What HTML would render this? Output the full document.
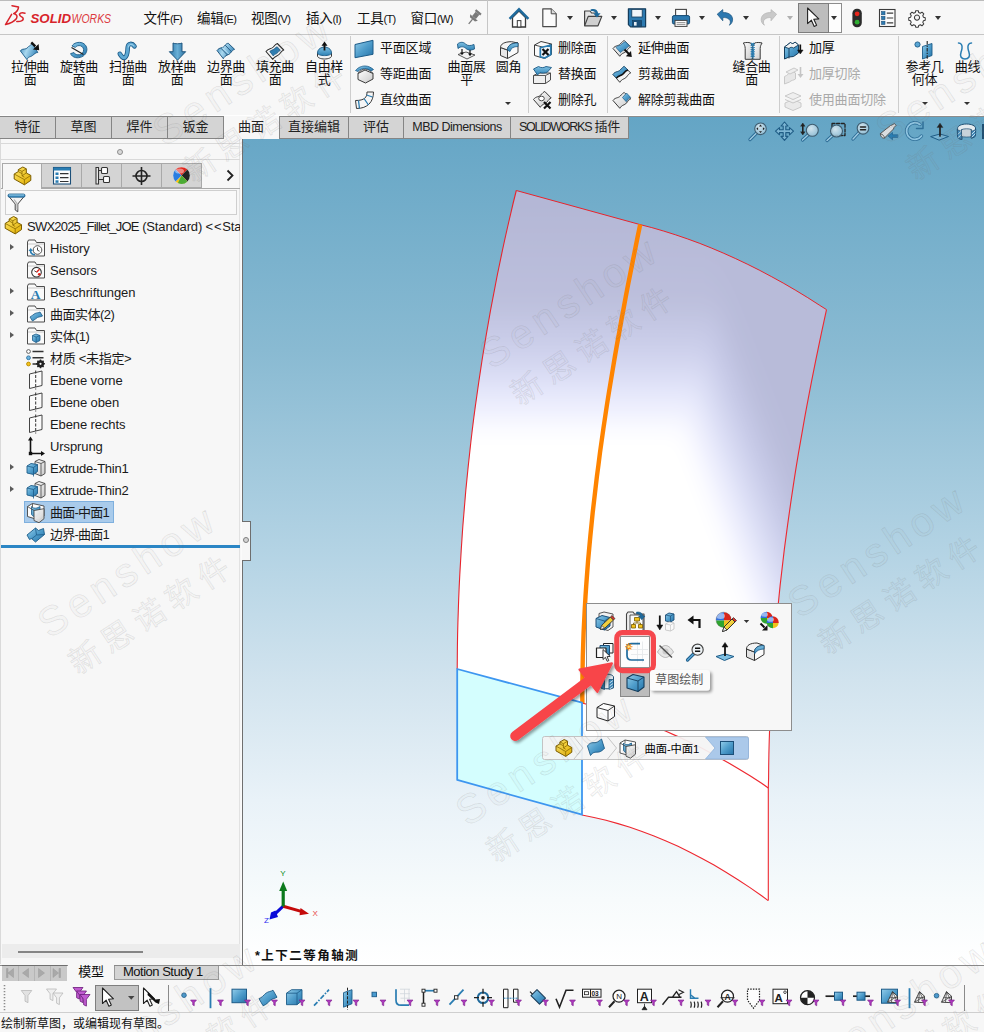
<!DOCTYPE html>
<html lang="zh">
<head>
<meta charset="utf-8">
<title>SOLIDWORKS</title>
<style>
*{box-sizing:border-box;margin:0;padding:0}
html,body{width:984px;height:1032px;overflow:hidden;background:#f7f7f7;}
body{position:relative;font-family:"Liberation Sans","Noto Sans CJK SC",sans-serif;font-size:13px;color:#1a1a1a;}
.abs{position:absolute}
svg{position:absolute;overflow:visible}
/* title bar */
#title{left:0;top:0;width:984px;height:35px;background:#f7f7f7;border-top:1px solid #bcbcbc;border-bottom:1px solid #c6c6c6}
.menu{top:7px;font-size:13.5px;color:#111;white-space:nowrap;letter-spacing:-0.2px}
.menu small{font-size:11px;letter-spacing:-0.7px}
.dd{width:0;height:0;border-left:3.5px solid transparent;border-right:3.5px solid transparent;border-top:4px solid #333}
/* ribbon */
#ribbon{left:0;top:35px;width:984px;height:81px;background:#f7f7f7}
.big{top:61px;width:50px;text-align:center;font-size:13px;line-height:12.5px;color:#111;letter-spacing:-0.3px}
.sm{font-size:13px;color:#111;white-space:nowrap;letter-spacing:-0.2px;line-height:16px}
.sm.dis{color:#a9a9a9}
.vsep{top:36px;width:1px;height:77px;background:#cdcdcd}
/* cmd tabs */
.tab{top:116px;height:23px;background:#d4d4d4;border:1px solid #858585;border-left:none;font-size:13px;line-height:20px;text-align:center;color:#222;white-space:nowrap}
.tab.act{background:#f7f7f7;border-color:transparent;border-bottom:none}
/* left panel */
#panel{left:0;top:139px;width:243px;height:826px;background:#f7f7f7;border-right:1px solid #6f6f6f}
.ptab{top:163px;height:25px;width:40px;background:#d4d4d4;border:1px solid #a9a9a9;border-left:none}
.trow{left:50px;height:22px;line-height:22px;font-size:13px;white-space:nowrap;color:#1a1a1a;letter-spacing:-0.1px}
.exp{left:10px;width:0;height:0;border-top:3.5px solid transparent;border-bottom:3.5px solid transparent;border-left:4.5px solid #5a5a5a}
/* viewport */
#view{left:243px;top:116px;width:741px;height:849px;background:linear-gradient(to bottom,#64a5c5 0,#89bad2 27.56%,#b3d3e4 51.1%,#d1e3ee 66.4%,#e9f2f8 80.6%,#f7fbfc 92.3%,#ffffff 100%)}
/* bottom */
#btabs{left:0;top:965px;width:984px;height:17px;background:#f7f7f7;border-top:1px solid #8a8a8a}
#ftool{left:0;top:982px;width:984px;height:31px;background:#f7f7f7;border-bottom:1px solid #cfcfcf}
#status{left:0;top:1013px;width:984px;height:19px;background:#f7f7f7;font-size:12px;line-height:23px;padding-left:1px;letter-spacing:0;color:#111}
.wm{position:absolute;color:rgba(150,150,150,.04);-webkit-text-stroke:.8px rgba(110,110,110,.16);white-space:nowrap;transform-origin:0 0;pointer-events:none;width:0;height:0}
</style>
</head>
<body>
<div id="view" class="abs"></div>
<svg id="model" width="984" height="1032" viewBox="0 0 984 1032" style="left:0;top:0">
<defs>
<clipPath id="cs"><polygon points="516.3,190.5 639.8,224.5 651.8,227.6 663.8,231.1 675.8,234.9 687.8,239.0 699.8,243.4 711.8,248.2 723.8,253.3 735.8,258.7 747.8,264.4 759.8,270.4 771.8,276.8 783.8,283.4 795.8,290.4 807.8,297.7 819.8,305.4 826.5,309.6 823.9,321.6 821.3,333.6 818.8,345.6 816.3,357.6 813.9,369.6 811.5,381.6 809.2,393.6 806.9,405.6 804.7,417.6 802.6,429.6 800.5,441.6 798.4,453.6 796.4,465.6 794.5,477.6 792.7,489.6 790.9,501.6 789.2,513.6 787.5,525.6 785.9,537.6 784.3,549.6 782.9,561.6 781.5,573.6 780.1,585.6 778.9,597.6 777.7,609.6 776.5,621.6 775.5,633.6 774.5,645.6 773.6,657.6 772.7,669.6 771.9,681.6 771.2,693.6 770.6,705.6 770.1,717.6 769.6,729.6 769.2,741.6 768.9,753.6 768.7,765.6 768.6,777.6 768.3,788.0 768.2,900.6 768.2,900.6 762.0,896.0 750.0,887.6 738.0,879.7 726.0,872.2 714.0,865.1 702.0,858.4 690.0,852.2 678.0,846.3 666.0,841.0 654.0,836.0 642.0,831.4 630.0,827.3 618.0,823.6 606.0,820.3 594.0,817.5 582.0,815.0 457.2,779.9 457.2,669.0 457.3,658.5 457.4,646.5 457.6,634.5 457.9,622.5 458.3,610.5 458.7,598.5 459.2,586.5 459.8,574.5 460.5,562.5 461.2,550.5 462.0,538.5 462.8,526.5 463.8,514.5 464.8,502.5 465.8,490.5 467.0,478.5 468.2,466.5 469.5,454.5 470.8,442.5 472.2,430.5 473.7,418.5 475.3,406.5 477.0,394.5 478.7,382.5 480.5,370.5 482.3,358.5 484.3,346.5 486.3,334.5 488.4,322.5 490.5,310.5 492.8,298.5 495.1,286.5 497.4,274.5 499.9,262.5 502.4,250.5 505.0,238.5 507.7,226.5 510.5,214.5 513.3,202.5 516.3,190.5"/></clipPath>
<linearGradient id="gv" gradientUnits="userSpaceOnUse" x1="0" y1="190" x2="0" y2="436">
<stop offset="0" stop-color="#b3b6d5"/><stop offset="0.45" stop-color="#bcbfdc"/><stop offset="0.67" stop-color="#cfd2ed"/><stop offset="0.85" stop-color="#e8eafd"/><stop offset="1" stop-color="#ffffff"/>
</linearGradient>
<linearGradient id="gr" gradientUnits="userSpaceOnUse" x1="690" y1="459" x2="774.2" y2="427">
<stop offset="0" stop-color="#ffffff"/><stop offset="0.2" stop-color="#eff0ff"/><stop offset="0.42" stop-color="#dcdff6"/><stop offset="0.7" stop-color="#c6c9e7"/><stop offset="1" stop-color="#b8bbd9"/>
</linearGradient>
<filter id="bl" filterUnits="userSpaceOnUse" x="380" y="120" width="540" height="860"><feGaussianBlur stdDeviation="11"/></filter>
</defs>
<g clip-path="url(#cs)"><g filter="url(#bl)"><g style="isolation:isolate">
<rect x="380" y="120" width="540" height="860" fill="#ffffff"/>
<rect x="380" y="120" width="540" height="860" fill="url(#gr)" style="mix-blend-mode:darken"/>
<rect x="380" y="120" width="540" height="860" fill="url(#gv)" style="mix-blend-mode:darken"/>
</g></g>
</g>
<polygon points="457.2,669 582,702.6 582,814.7 457.2,779.9" fill="#d4fefe"/>
<polyline points="516.3,190.5 639.8,224.5 651.8,227.6 663.8,231.1 675.8,234.9 687.8,239.0 699.8,243.4 711.8,248.2 723.8,253.3 735.8,258.7 747.8,264.4 759.8,270.4 771.8,276.8 783.8,283.4 795.8,290.4 807.8,297.7 819.8,305.4 826.5,309.6" fill="none" stroke="#e8242c" stroke-width="1"/>
<polyline points="516.3,190.5 513.3,202.5 510.5,214.5 507.7,226.5 505.0,238.5 502.4,250.5 499.9,262.5 497.4,274.5 495.1,286.5 492.8,298.5 490.5,310.5 488.4,322.5 486.3,334.5 484.3,346.5 482.3,358.5 480.5,370.5 478.7,382.5 477.0,394.5 475.3,406.5 473.7,418.5 472.2,430.5 470.8,442.5 469.5,454.5 468.2,466.5 467.0,478.5 465.8,490.5 464.8,502.5 463.8,514.5 462.8,526.5 462.0,538.5 461.2,550.5 460.5,562.5 459.8,574.5 459.2,586.5 458.7,598.5 458.3,610.5 457.9,622.5 457.6,634.5 457.4,646.5 457.3,658.5 457.2,669.0" fill="none" stroke="#e8242c" stroke-width="1.1"/>
<polyline points="826.5,309.6 823.9,321.6 821.3,333.6 818.8,345.6 816.3,357.6 813.9,369.6 811.5,381.6 809.2,393.6 806.9,405.6 804.7,417.6 802.6,429.6 800.5,441.6 798.4,453.6 796.4,465.6 794.5,477.6 792.7,489.6 790.9,501.6 789.2,513.6 787.5,525.6 785.9,537.6 784.3,549.6 782.9,561.6 781.5,573.6 780.1,585.6 778.9,597.6 777.7,609.6 776.5,621.6 775.5,633.6 774.5,645.6 773.6,657.6 772.7,669.6 771.9,681.6 771.2,693.6 770.6,705.6 770.1,717.6 769.6,729.6 769.2,741.6 768.9,753.6 768.7,765.6 768.6,777.6 768.3,788.0 768.3,900.6" fill="none" stroke="#ee2830" stroke-width="1.1"/>
<polyline points="582.0,815.0 594.0,817.5 606.0,820.3 618.0,823.6 630.0,827.3 642.0,831.4 654.0,836.0 666.0,841.0 678.0,846.3 690.0,852.2 702.0,858.4 714.0,865.1 726.0,872.2 738.0,879.7 750.0,887.6 762.0,896.0 768.2,900.6" fill="none" stroke="#ee2830" stroke-width="1.1"/>
<polyline points="582.0,703.0 594.0,706.1 606.0,709.4 618.0,713.1 630.0,717.2 642.0,721.5 654.0,726.2 666.0,731.2 678.0,736.6 690.0,742.3 702.0,748.3 714.0,754.7 726.0,761.4 738.0,768.4 750.0,775.8 762.0,783.5 768.3,788.0" fill="none" stroke="#ee2830" stroke-width="1.2"/>
<polyline points="639.8,224.5 637.3,236.5 634.9,248.5 632.5,260.5 630.1,272.5 627.7,284.5 625.4,296.5 623.2,308.5 620.9,320.5 618.8,332.5 616.6,344.5 614.5,356.5 612.5,368.5 610.5,380.5 608.5,392.5 606.6,404.5 604.8,416.5 603.0,428.5 601.3,440.5 599.6,452.5 598.1,464.5 596.5,476.5 595.1,488.5 593.7,500.5 592.3,512.5 591.1,524.5 589.9,536.5 588.8,548.5 587.7,560.5 586.8,572.5 585.9,584.5 585.1,596.5 584.4,608.5 583.8,620.5 583.2,632.5 582.8,644.5 582.4,656.5 582.2,668.5 582.0,680.5 581.9,692.5 582.0,703.0" fill="none" stroke="#ff8400" stroke-width="4.4" transform="translate(.4 0)"/>
<polygon points="457.2,669 582,702.6 582,814.7 457.2,779.9" fill="none" stroke="#3d96f0" stroke-width="1.8" stroke-linejoin="round"/>
</svg>
<div id="title" class="abs"></div>
<div class="abs tsep" style="left:487px;top:0;width:1px;height:35px;background:#c6c6c6"></div>
<svg width="984" height="35" viewBox="0 0 984 35" style="left:0;top:0">
<!-- DS logo -->
<g fill="none" stroke="#d8232a" stroke-width="1.5" stroke-linecap="round" stroke-linejoin="round">
<path d="M12.0,5.7 L18.5,7.1 Q18.3,11.1 13.7,13.6 Q18.3,14.8 16.5,18.5 Q13.4,22.7 5.5,24.6 L11.6,14.4"/>
<path d="M25.0,13.2 Q20.5,12.2 19.5,14.2 Q19.3,15.9 22.4,17.4 Q24.4,19.3 21.5,20.9 Q19.5,21.8 16.8,21.5"/>
</g>
<text x="30.5" y="22.6" font-family="Liberation Sans,sans-serif" font-size="12.6" font-style="italic" font-weight="bold" fill="#d8232a" textLength="40.5" lengthAdjust="spacingAndGlyphs">SOLID</text>
<text x="71.6" y="22.6" font-family="Liberation Sans,sans-serif" font-size="12.6" font-style="italic" fill="#dc3a40" textLength="39.5" lengthAdjust="spacingAndGlyphs">WORKS</text>
<!-- pin -->
<g transform="translate(474 17.5) rotate(40) scale(1.1)" fill="#7a7a7a"><rect x="-3.2" y="-7" width="6.4" height="2"/><rect x="-2.2" y="-5" width="4.4" height="5"/><path d="M-4.5 0h9l-1.5 2.2h-6z"/><rect x="-.6" y="2" width="1.2" height="5.5"/></g>
<!-- home -->
<g><path d="M512.5 17.5V27h13V17.5L519 11z" fill="#fff" stroke="#3a3a3a" stroke-width="1.3"/><rect x="517.3" y="20.6" width="3.6" height="6.4" fill="#fff" stroke="#3a3a3a" stroke-width="1"/><path d="M509.6 18.8L519 9.4l9.4 9.4" fill="none" stroke="#1f6a9c" stroke-width="2.6" stroke-linejoin="miter"/></g>
<!-- new -->
<path d="M542.8 8.8h8.4l5 5V26.6h-13.4z" fill="#fbfbfb" stroke="#4a4a4a" stroke-width="1.2" stroke-linejoin="round"/><path d="M551.2 8.8v5h5" fill="#dcdcdc" stroke="#4a4a4a" stroke-width="1"/>
<!-- open -->
<g><path d="M584.6 25.8V11h5.4l1.6 2h4.4v3" fill="#e4e4e4" stroke="#444" stroke-width="1.2" stroke-linejoin="round"/><path d="M584.6 25.8l3.6-9.4h13.6l-3.8 9.4z" fill="#d0d0d0" stroke="#444" stroke-width="1.2" stroke-linejoin="round"/><path d="M590.6 9.6c4-1.4 7 .4 7.6 3.6h2.4l-3.6 4.4-3.8-4.4h2.4c-.6-1.8-2.4-2.8-5-2z" fill="#1f6a9c"/></g>
<!-- save -->
<g><path d="M628.4 8.8h17.2v18h-15l-2.2-2.2z" fill="#2d7ab0" stroke="#143d5c" stroke-width="1.2" stroke-linejoin="round"/><rect x="631.8" y="9.4" width="10.4" height="7.6" fill="#f2f6fa" stroke="#143d5c" stroke-width=".8"/><rect x="632.6" y="20.6" width="9" height="6.2" fill="#1c4f78" stroke="#143d5c" stroke-width=".6"/><rect x="634" y="22" width="2.6" height="3.6" fill="#e8eef4"/></g>
<!-- print -->
<g><rect x="675.6" y="9.4" width="10.8" height="7" fill="#fdfdfd" stroke="#444" stroke-width="1.1"/><rect x="672.4" y="15.6" width="17.2" height="8.4" rx="1.6" fill="#2d7ab0" stroke="#164a72" stroke-width="1"/><rect x="675" y="20.4" width="12" height="6" fill="#fdfdfd" stroke="#444" stroke-width="1"/><path d="M676.6 22.6h8.8M676.6 24.4h8.8" stroke="#777" stroke-width=".8"/></g>
<!-- undo -->
<path d="M717.2 14.2l5.6-4.6v3c5-.4 9.4 2 9.8 6.4.2 2.6-1 4.800-3.200 6.200 1.400-2.200 1.400-4.400-.4-6-1.600-1.400-3.800-1.800-6.200-1.600v3.200z" fill="#2c78b0" stroke="#1b557f" stroke-width=".7" stroke-linejoin="round"/>
<!-- redo -->
<path d="M776.6 14.2l-5.6-4.6v3c-5-.4-9.400 2-9.800 6.400-.2 2.600 1 4.800 3.200 6.200-1.400-2.200-1.400-4.400.4-6 1.600-1.400 3.800-1.800 6.200-1.600v3.200z" fill="#c9c9c9" stroke="#b5b5b5" stroke-width=".7" stroke-linejoin="round"/>
<!-- select -->
<rect x="798.5" y="3.5" width="43" height="29" fill="#fdfdfd" stroke="#8c8c8c"/><rect x="798.5" y="3.5" width="30" height="29" fill="#bdbdbd" stroke="#7d7d7d"/>
<path d="M807.6 8v15.6l3.800-3.400 2.800 6.200 2.400-1.100-2.800-6 5-.4z" fill="#fff" stroke="#222" stroke-width="1.100" stroke-linejoin="round"/>
<!-- traffic -->
<rect x="852.4" y="8.800" width="9.400" height="18.400" rx="4.400" fill="#2b2b2b"/><circle cx="857.1" cy="13.800" r="2.400" fill="#e8261c"/><circle cx="857.1" cy="22.200" r="2.400" fill="#2fae33"/>
<!-- options -->
<rect x="879.5" y="9.500" width="15.500" height="17" fill="#fcfcfc" stroke="#3b3b3b" stroke-width="1.100"/><g fill="#2d7ab0" stroke="#1b4f78" stroke-width=".6"><rect x="881.6" y="11.600" width="3.400" height="3.200"/><rect x="881.6" y="16.400" width="3.400" height="3.200"/><rect x="881.6" y="21.200" width="3.400" height="3.200"/></g><path d="M886.8 13.200h6.400M886.8 18h6.400M886.8 22.800h6.400" stroke="#3b3b3b" stroke-width="1.200"/>
<!-- gear -->
<g transform="translate(917 17.6) scale(.86)" fill="none" stroke="#3a3a3a"><circle r="3" stroke-width="1.200"/><path stroke-width="1.200" stroke-linejoin="round" fill="#fafafa" d="M-1.500 -8h3l.5 2.100 1.900.8 1.900-1.200 2.100 2.100-1.200 1.900.8 1.900 2.100.5v3l-2.100.5-.8 1.900 1.200 1.900-2.100 2.100-1.900-1.200-1.900.8-.5 2.100h-3l-.5-2.100-1.900-.8-1.900 1.200-2.100-2.100 1.200-1.900-.8-1.900-2.100-.5v-3l2.100-.5.8-1.900-1.200-1.900 2.100-2.100 1.900 1.200 1.900-.8z"/><circle r="3" stroke-width="1.200" fill="#f4f4f4"/></g>
</svg>
<div class="abs menu" style="left:143.500px">文件<small>(F)</small></div>
<div class="abs menu" style="left:197px">编辑<small>(E)</small></div>
<div class="abs menu" style="left:251px">视图<small>(V)</small></div>
<div class="abs menu" style="left:306px">插入<small>(I)</small></div>
<div class="abs menu" style="left:357px">工具<small>(T)</small></div>
<div class="abs menu" style="left:410.500px">窗口<small>(W)</small></div>
<div class="abs dd" style="left:567px;top:16px"></div>
<div class="abs dd" style="left:610.500px;top:16px"></div>
<div class="abs dd" style="left:654.500px;top:16px"></div>
<div class="abs dd" style="left:699px;top:16px"></div>
<div class="abs dd" style="left:742.500px;top:16px"></div>
<div class="abs dd" style="left:787px;top:16px;border-top-color:#b0b0b0"></div>
<div class="abs dd" style="left:831px;top:16px"></div>
<div class="abs dd" style="left:935px;top:16px"></div>
<div id="ribbon" class="abs"></div>
<svg width="984" height="81" viewBox="0 35 984 81" style="left:0;top:35px">
<defs>
<linearGradient id="gb" x1="0" y1="0" x2="1" y2="1"><stop offset="0" stop-color="#93cdea"/><stop offset=".5" stop-color="#4f9dcb"/><stop offset="1" stop-color="#2573a8"/></linearGradient>
<linearGradient id="bl2" x1="0" y1="0" x2="0" y2="1"><stop offset="0" stop-color="#7fc0e2"/><stop offset="1" stop-color="#2f83b6"/></linearGradient>
<linearGradient id="gw3" x1="0" y1="0" x2="1" y2=".35"><stop offset="0" stop-color="#3a86b8"/><stop offset=".45" stop-color="#a9d8ef"/><stop offset="1" stop-color="#3f8cbe"/></linearGradient>
<linearGradient id="gl4" x1="0" y1="0" x2="1" y2="0"><stop offset="0" stop-color="#2d75a6"/><stop offset=".5" stop-color="#69afd6"/><stop offset="1" stop-color="#2a6e9e"/></linearGradient>
<linearGradient id="gy" x1="0" y1="0" x2="1" y2="1"><stop offset="0" stop-color="#ffffff"/><stop offset="1" stop-color="#c9c9c9"/></linearGradient>
</defs>
<!-- 1 extrude surf -->
<g><path d="M20.300 50.800C23 47.800 25.500 50.300 28 47.300C30 45 31.500 44.300 33 44.300L37.800 52.500C35.500 52.500 34.500 54 32.500 55.500C30 57.500 28.500 56 27 59.700Z" fill="url(#gw3)" stroke="#1c5b88" stroke-width=".9" stroke-linejoin="round"/><path d="M31.300 42.300l4 4" stroke="#111" stroke-width="2.400"/><path d="M39.200 50.200l-6.300-.6 5.700-5.700z" fill="#111"/></g>
<!-- 2 revolve -->
<g><path d="M72 46c1.600-3 6.600-4.600 10.600-3 4 1.800 5.200 6 3.600 9.600-1.800 3.800-6.400 5.800-10.600 5-2.600-.6-4.400-2.200-5-4l3.400-1c.6 1.200 2 2 3.800 2.200 2.600.2 4.800-1.200 5.600-3.400.8-2.400-.4-4.800-2.800-5.600-2-.6-4.200 0-5.200 1.600z" fill="url(#gb)" stroke="#1c5b88" stroke-width=".9" stroke-linejoin="round"/><path d="M71.500 47.500l12 7" stroke="#222" stroke-width="1.100"/></g>
<!-- 3 sweep -->
<g fill="none" stroke-linecap="round"><path d="M134.500 46.300C132 42.800 128.300 43.300 127.800 47C127.300 51 128 55 125 57.500C123.300 58.700 121.300 56.500 119.800 53.800" stroke="#1c5b88" stroke-width="4.600"/><path d="M134.500 46.300C132 42.800 128.300 43.300 127.800 47C127.300 51 128 55 125 57.500C123.300 58.700 121.300 56.500 119.800 53.800" stroke="#5fa9d4" stroke-width="2.900"/><path d="M133.500 45.500C131.500 43.300 128.800 44 128.500 47" stroke="#a9d8ef" stroke-width="1"/></g>
<!-- 4 loft -->
<g><path d="M173 43c1.400 1 7.600 1 9 0v8.700h3.700l-8.200 8.500-8.200-8.500h3.700z" fill="url(#gl4)" stroke="#174f78" stroke-width=".9" stroke-linejoin="round"/></g>
<!-- 5 boundary -->
<g><path d="M217 50.500C219.500 47 222.500 48.500 224.500 46C226 44 227 43.300 228.300 43.300L234.600 49.300C233 49.800 232 51 230.500 53C228.500 55.500 225.500 54.500 223.300 58.700Z" fill="url(#gw3)" stroke="#174f78" stroke-width=".9" stroke-linejoin="round"/><path d="M221 48.300L227.500 55M225.300 45.300L231.500 51.800" fill="none" stroke="#174f78" stroke-width=".9"/><path d="M222.500 47.500L228.800 54" fill="none" stroke="#b5def2" stroke-width=".9"/></g>
<!-- 6 fill -->
<g><path d="M266 51.500C268.500 48 271 49.500 273.300 47C275 45 276 44 277.300 43.500L283.700 50C282 50.500 281 52 279.500 54C277.500 56.500 275 55.500 272.800 59.300Z" fill="#f6f6f6" stroke="#2e2e2e" stroke-width="1.100" stroke-linejoin="round"/><path d="M269.800 51.500C271.300 49.800 272.800 50.300 274.300 48.800C275.500 47.600 276.300 47.100 277.200 46.800L280.300 50.300C279.300 50.700 278.600 51.500 277.600 52.800C276.300 54.300 274.600 53.900 273.200 55.900Z" fill="#2f7db0" stroke="#174f78" stroke-width=".7" stroke-linejoin="round"/></g>
<!-- 7 freeform -->
<g><path d="M317.500 53v3c0 1.700 3.200 3 7 3s7-1.300 7-3v-3z" fill="#f4f4f4" stroke="#3a3a3a" stroke-width="1"/><path d="M317.500 53c0-3.300 2.500-5 4.500-5.500l2.500-.8 2.500.8c2 .5 4.500 2.200 4.500 5.500c0 1.500-3.200 2.600-7 2.600s-7-1.100-7-2.600z" fill="url(#bl2)" stroke="#1c5b88" stroke-width=".9"/><path d="M324.500 50.500v-5.500" stroke="#111" stroke-width="1.800"/><path d="M321.500 45.800l3-4.300 3 4.300z" fill="#111"/></g>
<!-- planar -->
<path d="M355 44.500l18-4.200v14l-18 3.400z" fill="url(#gb)" stroke="#1c5b88" stroke-width="1" stroke-linejoin="round"/>
<!-- offset -->
<g><path d="M358 73.500l7-3.500 8 3.500v5.500l-7.500 4-7.500-3.500z" fill="url(#gy)" stroke="#3a3a3a" stroke-width="1" stroke-linejoin="round"/><path d="M358 73.500c2-3 5-4.500 7.500-4.500s5.500 2 7.500 4.500" fill="none" stroke="#3a3a3a" stroke-width="1"/><path d="M355.500 70.500c3-3.500 6.500-4.500 9.500-4.500 3.500 0 6 1.500 8.500 3.500l-2.500 1.500c-2-1.500-4-2.500-6.500-2.500s-4.500 1-6.500 3z" fill="url(#gb)" stroke="#1c5b88" stroke-width=".8" stroke-linejoin="round"/></g>
<!-- ruled -->
<g><path d="M355.500 100.500c9 0 11.500-3 11.500-8.500h6.500c0 10-6 16.500-17 16.500z" fill="#f6f6f6" stroke="#3a3a3a" stroke-width="1" stroke-linejoin="round"/><path d="M358.500 100.500l1 8M364 98.500l4.500 6.500M366.500 95l6 2" stroke="#2a7db2" stroke-width="1.300"/></g>
<!-- flatten -->
<g><path d="M458 54.500l8-2.500 9 3-8 4z" fill="#f2f2f2" stroke="#4a4a4a" stroke-width=".9" stroke-linejoin="round"/><path d="M457.500 44c3-2.500 6-2 8 0s5 2 8.500.5l.5 4.500c-3.500 1.500-6.500 1.500-8.500-.5s-5-2.500-8 0z" fill="url(#bl2)" stroke="#1c5b88" stroke-width=".9" stroke-linejoin="round"/><path d="M462 49v4M470 50v4" stroke="#111" stroke-width="1.200"/><path d="M460 52.500l2 2.800 2-2.800zM468 53.500l2 2.800 2-2.800z" fill="#111"/></g>
<!-- fillet -->
<g><path d="M500.500 47.500l7 2.500v8.500l-7-3z" fill="#e9e9e9" stroke="#3a3a3a" stroke-width="1" stroke-linejoin="round"/><path d="M507.500 50c0-4 3-7 10.500-7v9.500l-10.500 6z" fill="#fafafa" stroke="#3a3a3a" stroke-width="1" stroke-linejoin="round"/><path d="M500.500 47.500c0-3.500 4-5.800 11-5.800l6.500 1.300c-7.500 0-10.500 3-10.500 7z" fill="#f4f4f4" stroke="#3a3a3a" stroke-width="1" stroke-linejoin="round"/><path d="M507.500 50c0-4 3-7 10.500-7v3.500c-4.500 0-7 1.500-8 5z" fill="url(#bl2)" stroke="#1c5b88" stroke-width=".8" stroke-linejoin="round"/></g>
<!-- delete face -->
<g><path d="M534.500 45l6.500-3.500 10.500 2.500v10.500l-7 4-10-3z" fill="#fbfbfb" stroke="#3a3a3a" stroke-width="1" stroke-linejoin="round"/><path d="M534.500 45l10 2.500 7-3.500" fill="none" stroke="#3a3a3a" stroke-width=".9"/><path d="M540.300 47.800l10.500-2.800v9.500l-6 3.500-4.500-1.200z" fill="#eaf3f9" stroke="#2a7db2" stroke-width="1.700" stroke-linejoin="round"/><path d="M542.500 49l6 6M548.500 49l-6 6" stroke="#111" stroke-width="2.200"/></g>
<!-- replace face -->
<g><path d="M533.500 75.500l5-2.500h12v7l-5 3.500h-12z" fill="#efefef" stroke="#4a4a4a" stroke-width="1" stroke-linejoin="round"/><path d="M533.500 75.500h12v8M545.500 75.500l5-2.500" fill="none" stroke="#4a4a4a" stroke-width=".9"/><path d="M533.500 69l5-2.500c2.500 1.500 5 1.500 7.500 0l5.500 1-4 4.500c-2.500 1-5 1.500-7.500.5l-2.500 2.500z" fill="url(#bl2)" stroke="#1c5b88" stroke-width=".9" stroke-linejoin="round"/></g>
<!-- delete hole -->
<g><path d="M533.5 99.5C536.0 96.0 538.5 97.5 540.8 95.0C542.5 93.0 543.5 92.0 544.8 91.5L551.2 98.0C549.5 98.5 548.5 100.0 547.0 102.0C545.0 104.5 542.5 103.5 540.3 107.3Z" fill="url(#gy)" stroke="#3a3a3a" stroke-width="1" stroke-linejoin="round"/><ellipse cx="541.500" cy="98.500" rx="2.800" ry="2.300" fill="#fff" stroke="#3a3a3a" stroke-width=".9"/><path d="M544 102l6.500 6.500M550.500 102l-6.500 6.500" stroke="#111" stroke-width="2.200"/></g>
<!-- extend -->
<g><path d="M613.0 48.5C615.5 45.0 618.0 46.5 620.3 44.0C622.0 42.0 623.0 41.0 624.3 40.5L630.7 47.0C629.0 47.5 628.0 49.0 626.5 51.0C624.5 53.5 622.0 52.5 619.8 56.3Z" fill="url(#gy)" stroke="#3a3a3a" stroke-width="1" stroke-linejoin="round"/><path d="M616 47.500C618 45 620 46 622 44C623.500 42.500 624.500 42 625.500 41.800L629.500 46C628.300 46.300 627.500 47 626.300 48.500C624.500 50.500 622.500 50 620.500 52.500Z" fill="url(#gb)" stroke="#1c5b88" stroke-width=".7" stroke-linejoin="round"/><path d="M624.500 49.500l4.500 4.500" stroke="#111" stroke-width="1.900"/><path d="M631.800 57l-.8-6-5.200 5.200z" fill="#111"/></g>
<!-- trim -->
<g><path d="M613.0 74.5C615.5 71.0 618.0 72.5 620.3 70.0C622.0 68.0 623.0 67.0 624.3 66.5L630.7 73.0C629.0 73.5 628.0 75.0 626.5 77.0C624.5 79.5 622.0 78.5 619.8 82.3Z" fill="#f4f4f4" stroke="#3a3a3a" stroke-width="1" stroke-linejoin="round"/><path d="M613 74.500C615.500 71 618 72.500 620.300 70C622 68 623 67 624.300 66.500L627.800 70C626 70.500 625 71.500 623.500 73.500C621.500 76 619 75 616.500 78Z" fill="url(#gb)" stroke="#1c5b88" stroke-width=".8" stroke-linejoin="round"/><path d="M616.500 78C619 75 621.500 76 623.500 73.500C625 71.500 626 70.500 627.800 70" fill="none" stroke="#111" stroke-width="1.600"/></g>
<!-- untrim -->
<g><path d="M613.0 100.5C615.5 97.0 618.0 98.5 620.3 96.0C622.0 94.0 623.0 93.0 624.3 92.5L630.7 99.0C629.0 99.5 628.0 101.0 626.5 103.0C624.5 105.5 622.0 104.5 619.8 108.3Z" fill="url(#gy)" stroke="#3a3a3a" stroke-width="1" stroke-linejoin="round"/><path d="M622.500 97.500l4-4.500 4.200 4.500c-1.200.3-2 1-3.200 2.500l-1.300 1.700z" fill="url(#gb)" stroke="#1c5b88" stroke-width=".7" stroke-linejoin="round"/></g>
<!-- knit -->
<g><path d="M743.300 43C746 42.300 748.500 42.300 750.700 43L752.700 46.500V59.300H745.200V48.500C745.200 46 744.200 44.300 743.300 43Z" fill="url(#gy)" stroke="#3a3a3a" stroke-width="1" stroke-linejoin="round"/><path d="M762.100 43C759.400 42.300 756.900 42.300 754.700 43L752.700 46.500V59.300H760.200V48.500C760.200 46 761.200 44.300 762.100 43Z" fill="url(#gy)" stroke="#3a3a3a" stroke-width="1" stroke-linejoin="round"/><path d="M751.200 43l3 2.200-3 2.200 3 2.200-3 2.200 3 2.200-3 2.200 3 2.200M754.200 43l-3 2.200 3 2.200-3 2.200 3 2.200-3 2.200 3 2.200-3 2.200" fill="none" stroke="#2a7db2" stroke-width="1.100"/></g>
<!-- thicken -->
<g><path d="M784.500 47l6-4.500c1.500 1.500 3 1.500 4.500-.5l3.500 3v8l-5 3.500-4.500.5-4.500 2z" fill="url(#gb)" stroke="#143d5c" stroke-width="1" stroke-linejoin="round"/><path d="M784.500 47l6-4.500c1.500 1.500 3 1.500 4.500-.5l3.500 3-5 3c-1.500-1-3-1-4.500.5z" fill="#f4f4f4" stroke="#143d5c" stroke-width=".9" stroke-linejoin="round"/><path d="M789 48.500v10" stroke="#143d5c" stroke-width=".9"/><path d="M800.300 44.500v6.500" stroke="#111" stroke-width="1.700"/><path d="M797.500 50l2.800 4 2.800-4z" fill="#111" stroke="#111" stroke-width=".5"/></g>
<!-- thicken cut (disabled) -->
<g opacity=".9"><path d="M784.500 76.500c3-1 4.500-3.500 7-5.500l4 2v6c-2 1.500-4 1-6 3l-5 2z" fill="#e6e6e6" stroke="#c4c4c4" stroke-width="1" stroke-linejoin="round"/><path d="M786 72l8-4 4 2-8 4z" fill="#ededed" stroke="#c4c4c4"/><path d="M800.500 67v8" stroke="#c0c0c0" stroke-width="1.600"/><path d="M797.500 74l3 4 3-4z" fill="#c0c0c0"/></g>
<!-- surface cut (disabled) -->
<g opacity=".9"><path d="M785 103l8-3.500 8 3.500v4l-8 3.500-8-3.500z" fill="#e9e9e9" stroke="#c4c4c4" stroke-width="1" stroke-linejoin="round"/><path d="M785 96l8-3.500 8 3.500-8 3.500zM785 99.500l8 3.500 8-3.500" fill="#efefef" stroke="#c4c4c4" stroke-width="1" stroke-linejoin="round"/></g>
<!-- ref geometry -->
<g><circle cx="917.500" cy="44.500" r="2.600" fill="#5aa6d4" stroke="#1c5b88" stroke-width=".9"/><path d="M922.500 46.500l9.500-3v12l-9.500 3.500z" fill="url(#gb)" stroke="#1c5b88" stroke-width=".9" stroke-linejoin="round"/><path d="M927.200 41v19.500" stroke="#222" stroke-width="1.100" stroke-dasharray="3.500 1.200 1.200 1.200"/></g>
<!-- curves -->
<path d="M958.500 43c2.500 0 4 2 3.500 5.500-.6 4-2.500 6-1 8.500 1.600 2.600 6.400 2.600 8 0 1.500-2.500-.4-4.500-1-8.500-.5-3.500 1-5.500 3.500-5.500" fill="none" stroke="#2a7db2" stroke-width="1.500" stroke-linecap="round"/>
</svg>
<div class="abs vsep" style="left:350px"></div>
<div class="abs vsep" style="left:528px"></div>
<div class="abs vsep" style="left:607px"></div>
<div class="abs vsep" style="left:779px"></div>
<div class="abs vsep" style="left:898px"></div>
<div class="abs big" style="left:5px">拉伸曲<br>面</div>
<div class="abs big" style="left:54px">旋转曲<br>面</div>
<div class="abs big" style="left:103px">扫描曲<br>面</div>
<div class="abs big" style="left:152px">放样曲<br>面</div>
<div class="abs big" style="left:201px">边界曲<br>面</div>
<div class="abs big" style="left:250px">填充曲<br>面</div>
<div class="abs big" style="left:299px">自由样<br>式</div>
<div class="abs big" style="left:441.500px">曲面展<br>平</div>
<div class="abs big" style="left:483.500px">圆角</div>
<div class="abs big" style="left:726.500px">缝合曲<br>面</div>
<div class="abs big" style="left:899.500px">参考几<br>何体</div>
<div class="abs big" style="left:942.500px">曲线</div>
<div class="abs sm" style="left:380px;top:40px">平面区域</div>
<div class="abs sm" style="left:380px;top:66px">等距曲面</div>
<div class="abs sm" style="left:380px;top:92px">直纹曲面</div>
<div class="abs sm" style="left:558px;top:40px">删除面</div>
<div class="abs sm" style="left:558px;top:66px">替换面</div>
<div class="abs sm" style="left:558px;top:92px">删除孔</div>
<div class="abs sm" style="left:638px;top:40px">延伸曲面</div>
<div class="abs sm" style="left:638px;top:66px">剪裁曲面</div>
<div class="abs sm" style="left:638px;top:92px">解除剪裁曲面</div>
<div class="abs sm" style="left:809px;top:40px">加厚</div>
<div class="abs sm dis" style="left:809px;top:66px">加厚切除</div>
<div class="abs sm dis" style="left:809px;top:92px">使用曲面切除</div>
<div class="abs dd" style="left:505px;top:101.500px;border-width:3.500px 3px 0 3px"></div>
<div class="abs dd" style="left:921.500px;top:101.500px;border-width:3.500px 3px 0 3px"></div>
<div class="abs dd" style="left:963.500px;top:101.500px;border-width:3.500px 3px 0 3px"></div>
<div class="abs rbline" style="left:0;top:115px;width:984px;height:1px;background:#fefefe"></div>
<div class="abs rbline" style="left:629px;top:116px;width:355px;height:1px;background:#8c8c8c"></div>
<div class="abs" style="left:0;top:116px;width:629px;height:23px;background:#f7f7f7;border-bottom:1px solid #a0a0a0"></div>
<div class="abs tab" style="left:0;width:56px">特征</div>
<div class="abs tab" style="left:56px;width:56px">草图</div>
<div class="abs tab" style="left:112px;width:56px">焊件</div>
<div class="abs tab" style="left:168px;width:56px">钣金</div>
<div class="abs tab act" style="left:224px;width:55px">曲面</div>
<div class="abs tab" style="left:279px;width:70px;border-left:1px solid #858585">直接编辑</div>
<div class="abs tab" style="left:349px;width:55px">评估</div>
<div class="abs tab" style="left:404px;width:107px;letter-spacing:-0.5px;font-size:12.5px">MBD Dimensions</div>
<div class="abs tab" style="left:511px;width:118px;letter-spacing:-0.3px"><span style="font-size:12.5px;letter-spacing:-1.25px">SOLIDWORKS</span> 插件</div>
<div id="panel" class="abs"></div>
<div class="abs" style="left:0;top:139px;width:240px;height:825px;border-right:1px solid #e2e2e2"></div>
<div class="abs" style="left:241px;top:139px;width:1px;height:826px;background:#fbfbfb"></div>
<div class="abs" style="left:0;top:143px;width:240px;height:1px;background:#d9d9d9"></div>
<div class="abs" style="left:0;top:158.500px;width:240px;height:1px;background:#d9d9d9"></div>
<div class="abs" style="left:117px;top:148.500px;width:6px;height:6px;border-radius:50%;border:1px solid #8e8e8e;background:#d9d9d9"></div>
<div class="abs" style="left:0;top:188px;width:240px;height:1px;background:#a9a9a9"></div>
<div class="abs" style="left:2px;top:163px;width:40px;height:26px;background:#f7f7f7;border:1px solid #a9a9a9;border-bottom:none"></div>
<div class="abs ptab" style="left:42px"></div>
<div class="abs ptab" style="left:82px"></div>
<div class="abs ptab" style="left:122px"></div>
<div class="abs ptab" style="left:162px"></div>
<div class="abs" style="left:5px;top:189.500px;width:232px;height:25px;border:1px solid #cfcfcf;background:#f9f9f9"></div>
<div class="abs" style="left:24px;top:501px;width:90px;height:22px;background:#a9cbeb;border:1px solid #7fb0de"></div>
<div class="abs" style="left:0;top:545px;width:240px;height:3px;background:#2b86c5"></div>
<div class="abs" style="left:242px;top:521px;width:9px;height:40px;background:#f7f7f7;border:1px solid #6e6e6e;border-left:none"></div><div class="abs" style="left:242px;top:522px;width:1px;height:38px;background:#f7f7f7"></div>
<div class="abs" style="left:243px;top:537px;width:6px;height:6px;border-radius:50%;border:1px solid #7e7e7e;background:#d4d4d4"></div>
<div class="abs" style="left:2px;top:944px;width:238px;height:14px;background:#ececec"></div>
<div class="abs" style="left:18px;top:950.500px;width:125px;height:2px;background:#858585"></div>
<div class="abs" style="left:0;top:139px;width:1px;height:825px;background:#dadada"></div>
<svg width="243" height="825" viewBox="0 139 243 825" style="left:0;top:139px">
<defs><linearGradient id="gyl" x1="0" y1="0" x2="1" y2="1"><stop offset="0" stop-color="#ffe768"/><stop offset="1" stop-color="#e0ac00"/></linearGradient></defs><path d="M14.2 174.0L18.3 171.6L18.3 169.6L22.8 167.0L26.3 168.8L26.3 173.0L30.8 175.4L30.8 180.4L24.4 184.8L14.2 179.0Z" fill="url(#gyl)" stroke="#7a5c00" stroke-width="1" stroke-linejoin="round"/><path d="M18.3 169.6L22.0 171.4L26.3 168.8M22.0 171.4L22.0 175.8L26.3 173.0M22.0 175.8L24.4 177.2M14.2 174.0L24.4 179.6L30.8 175.4M24.4 179.6L24.4 184.8M18.3 171.6L22.0 173.6" fill="none" stroke="#8a6a00" stroke-width=".8" stroke-linejoin="round"/><path d="M5.2 223.4L9.2 221.0L9.2 219.0L13.6 216.5L17.1 218.3L17.1 222.4L21.5 224.7L21.5 229.6L15.2 233.9L5.2 228.3Z" fill="url(#gyl)" stroke="#7a5c00" stroke-width="1" stroke-linejoin="round"/><path d="M9.2 219.0L12.8 220.8L17.1 218.3M12.8 220.8L12.8 225.1L17.1 222.4M12.8 225.1L15.2 226.5M5.2 223.4L15.2 228.8L21.5 224.7M15.2 228.8L15.2 233.9M9.2 221.0L12.8 223.0" fill="none" stroke="#8a6a00" stroke-width=".8" stroke-linejoin="round"/><g><rect x="53.500" y="167.500" width="17" height="16.500" fill="#fdfdfd" stroke="#1d4f78" stroke-width="1.100"/><rect x="53.500" y="167.500" width="17" height="3" fill="#2a7db2"/><g fill="#2a7db2"><rect x="55.500" y="172.500" width="3" height="2.500"/><rect x="55.500" y="176.500" width="3" height="2.500"/><rect x="55.500" y="180.300" width="3" height="2.500"/></g><path d="M60 173.700h8.500M60 177.700h8.500M60 181.500h8.500" stroke="#333" stroke-width="1.200"/></g>
<g fill="#fdfdfd" stroke="#333" stroke-width="1.100"><path d="M96 167.500h2.500v16.500h-2.500z" fill="#f1f1f1"/><path d="M98.500 170.500h3M98.500 179.500h4.500" fill="none"/><rect x="101.500" y="167.500" width="6" height="6" rx="1"/><rect x="103.500" y="176.500" width="6" height="6" rx="1"/></g>
<g fill="none" stroke="#222" stroke-width="1.600"><circle cx="141.500" cy="176" r="5.500"/><path d="M141.500 167v18M132.500 176h18"/></g>
<g><circle cx="181.500" cy="175.500" r="8.300" fill="#fff"/><path d="M181.500 175.500L175.600 169.600A8.300 8.300 0 0 1 187.400 169.600z" fill="#e1261c"/><path d="M181.500 175.500L187.400 169.600A8.300 8.300 0 0 1 187.400 181.400z" fill="#222"/><path d="M181.500 175.500L187.400 181.400A8.300 8.300 0 0 1 175.600 181.400z" fill="#f5c21b"/><path d="M181.500 175.500L175.600 181.400A8.300 8.300 0 0 1 175.600 169.600z" fill="#2a7de1"/><path d="M181.500 175.500L178 183A8.300 8.300 0 0 0 187.400 181.400z" fill="#38a838" opacity=".9"/><ellipse cx="179.500" cy="171" rx="4.500" ry="2.600" fill="#fff" opacity=".45"/></g>
<path d="M227.500 170.500l5 5-5 5" fill="none" stroke="#222" stroke-width="1.800"/>
<g><path d="M8.500 196l6.700 8v6l2.600 1.800v-7.800l6.700-8z" fill="#f3f3f3" stroke="#444" stroke-width="1" stroke-linejoin="round"/><path d="M14 199.500l3 4v6" fill="none" stroke="#b0b0b0" stroke-width="1.200"/><rect x="8" y="194" width="17" height="3.200" rx="1.500" fill="#3d8fc2" stroke="#1d5a86" stroke-width=".8"/><path d="M9 195h15" stroke="#a9d6ee" stroke-width=".9"/></g>
<g><path d="M27.5 256.0V242.0l1-2h6.5l1.5 2.500h8v13.500z" fill="#fafafa" stroke="#4d4d4d" stroke-width="1" stroke-linejoin="round"/><path d="M28 244.0h16" stroke="#bdbdbd" stroke-width=".8"/><circle cx="37.5" cy="250" r="4.300" fill="#fff" stroke="#444" stroke-width=".9"/><path d="M37.5 247.5v2.700l2 1" fill="none" stroke="#333" stroke-width=".9"/><path d="M30.5 250.5c0 2.500 2 4.200 4.500 4.200" fill="none" stroke="#2a7db2" stroke-width="1.700"/><path d="M28.5 251l2.200-3 2.200 3z" fill="#2a7db2"/></g>
<g><path d="M27.5 278.0V264.0l1-2h6.5l1.5 2.500h8v13.500z" fill="#fafafa" stroke="#4d4d4d" stroke-width="1" stroke-linejoin="round"/><path d="M28 266.0h16" stroke="#bdbdbd" stroke-width=".8"/><circle cx="36.5" cy="272.2" r="4.800" fill="#fff" stroke="#333" stroke-width="1.100"/><path d="M36.5 272.2l3-3" stroke="#e2231a" stroke-width="1.500"/><path d="M36.5 272.2l-2.200-1.500" stroke="#333" stroke-width=".9"/><circle cx="39.2" cy="274.3" r="1.300" fill="#e2231a"/></g>
<g><path d="M27.5 300.0V286.0l1-2h6.5l1.5 2.500h8v13.500z" fill="#fafafa" stroke="#4d4d4d" stroke-width="1" stroke-linejoin="round"/><path d="M28 288.0h16" stroke="#bdbdbd" stroke-width=".8"/><text x="30.8" y="299.2" font-family="Liberation Serif,serif" font-weight="bold" font-size="13.500" fill="#2a7db2">A</text></g>
<g><path d="M27.5 322.0V308.0l1-2h6.5l1.5 2.500h8v13.500z" fill="#fafafa" stroke="#4d4d4d" stroke-width="1" stroke-linejoin="round"/><path d="M28 310.0h16" stroke="#bdbdbd" stroke-width=".8"/><path d="M30 317c2-.8 3-2.500 5-3.500s3.500-.5 5-1.500l2.500 4c-1.500 1-3 .5-5 1.500s-3 2.700-5 3.500z" fill="url(#gb)" stroke="#1c5b88" stroke-width=".8" stroke-linejoin="round"/></g>
<g><path d="M27.5 344.0V330.0l1-2h6.5l1.5 2.500h8v13.500z" fill="#fafafa" stroke="#4d4d4d" stroke-width="1" stroke-linejoin="round"/><path d="M28 332.0h16" stroke="#bdbdbd" stroke-width=".8"/><path d="M32.5 335.5l3.500-1.500 4 1.500v5l-4 2-3.500-2z" fill="url(#gb)" stroke="#1c5b88" stroke-width=".8" stroke-linejoin="round"/><path d="M32.5 335.5l3.700 1.600 3.800-1.600M36.2 337.1v5.300" fill="none" stroke="#1c5b88" stroke-width=".7"/></g>
<g><circle cx="28.500" cy="351.5" r="1.900" fill="#fff" stroke="#555" stroke-width=".9"/><circle cx="28.500" cy="357.8" r="1.900" fill="#6db5e0" stroke="#2a6f9f" stroke-width=".9"/><circle cx="28.500" cy="364" r="1.900" fill="#f4c21c" stroke="#b88a00" stroke-width=".9"/><path d="M32.500 351.5h11M32.500 357.8h11M32.500 364h5" stroke="#333" stroke-width="1.500"/><g transform="translate(40.500 363.8)"><circle r="2.600" fill="none" stroke="#222" stroke-width="2"/><path d="M0 -4.400V4.400M-4.400 0H4.400M-3.100 -3.100L3.100 3.100M-3.100 3.100L3.100 -3.100" stroke="#222" stroke-width="1.400"/><circle r="1.100" fill="#f7f7f7"/></g></g>
<g><path d="M29.500 374l12.500-3v14.500l-12.500 3z" fill="#fbfbfb" stroke="#444" stroke-width="1" stroke-linejoin="round"/><path d="M35.700 370.5v19" stroke="#333" stroke-width="1" stroke-dasharray="3 1.500"/></g>
<g><path d="M29.500 396l12.500-3v14.500l-12.500 3z" fill="#fbfbfb" stroke="#444" stroke-width="1" stroke-linejoin="round"/><path d="M35.700 392.5v19" stroke="#333" stroke-width="1" stroke-dasharray="3 1.500"/></g>
<g><path d="M29.500 418l12.500-3v14.500l-12.500 3z" fill="#fbfbfb" stroke="#444" stroke-width="1" stroke-linejoin="round"/><path d="M35.700 414.5v19" stroke="#333" stroke-width="1" stroke-dasharray="3 1.500"/></g>
<g><path d="M30.500 440v13.500h11" fill="none" stroke="#111" stroke-width="1.600"/><path d="M28 440.5l2.500-4 2.500 4zM41 451l4 2.500-4 2.500z" fill="#111"/><rect x="28.800" y="451.8" width="3.400" height="3.400" fill="#111"/></g>
<g><path d="M35 461.5l4-2 6 2v12l-4 2.500-6-2.500z" fill="url(#gy)" stroke="#444" stroke-width=".9" stroke-linejoin="round"/><path d="M41 463.5v12.500M35 461.5l6 2 4-2" fill="none" stroke="#444" stroke-width=".8"/><path d="M27 466l4-2.500 6.500 1v7l-4 3-6.500-1.500z" fill="url(#gb)" stroke="#1c5b88" stroke-width=".9" stroke-linejoin="round"/><path d="M27 466l6.500 1.500 4-3M33.500 467.5v9" fill="none" stroke="#1c5b88" stroke-width=".8"/></g>
<g><path d="M35 483.5l4-2 6 2v12l-4 2.500-6-2.500z" fill="url(#gy)" stroke="#444" stroke-width=".9" stroke-linejoin="round"/><path d="M41 485.5v12.500M35 483.5l6 2 4-2" fill="none" stroke="#444" stroke-width=".8"/><path d="M27 488l4-2.500 6.500 1v7l-4 3-6.500-1.500z" fill="url(#gb)" stroke="#1c5b88" stroke-width=".9" stroke-linejoin="round"/><path d="M27 488l6.500 1.500 4-3M33.500 489.5v9" fill="none" stroke="#1c5b88" stroke-width=".8"/></g>
<g><path d="M27.500 506.5l5-3 11.500 2.500v10l-5 4-11.500-3.500z" fill="#fdfdfd" stroke="#444" stroke-width=".9" stroke-linejoin="round"/><path d="M31.500 506.5c1 1.500 3 2 5.500 1.500l3-1.500v7l-4 3.500c-2 0-3.500-1-4.500-2.500z" fill="url(#gb)" stroke="#1c5b88" stroke-width=".8" stroke-linejoin="round"/><path d="M34 510.5l10-1.800v10l-5 4-5-2.200z" fill="url(#gy)" stroke="#444" stroke-width=".9" stroke-linejoin="round" opacity=".96"/><path d="M27.500 506.5l6.500 4M32.500 503.5v4" fill="none" stroke="#444" stroke-width=".8"/></g>
<g><path d="M27 535l8.500-7 3 2.500 5-2 1 6-9 7.500-4-3.500-2 1z" fill="url(#gb)" stroke="#1c5b88" stroke-width=".9" stroke-linejoin="round"/><path d="M35.500 528l1 7-5 4M36.500 535l8-.5" fill="none" stroke="#1c5b88" stroke-width=".8"/></g>
</svg>
<div class="abs trow" style="left:27px;top:216px;width:213px;overflow:hidden"><span style="letter-spacing:-0.78px">SWX2025_Fillet_JOE</span><span style="letter-spacing:-0.15px"> (Standard) </span><span style="letter-spacing:0.8px">&lt;&lt;</span><span style="letter-spacing:-0.2px">Standard&gt;</span></div>
<div class="abs exp" style="top:243.5px"></div>
<div class="abs trow" style="top:238px;letter-spacing:-0.1px">History</div>
<div class="abs trow" style="top:260px;letter-spacing:-0.1px">Sensors</div>
<div class="abs exp" style="top:287.5px"></div>
<div class="abs trow" style="top:282px;letter-spacing:-0.1px">Beschriftungen</div>
<div class="abs exp" style="top:309.5px"></div>
<div class="abs trow" style="top:304px;letter-spacing:-0.5px">曲面实体(2)</div>
<div class="abs exp" style="top:331.5px"></div>
<div class="abs trow" style="top:326px;letter-spacing:-0.5px">实体(1)</div>
<div class="abs trow" style="top:348px;letter-spacing:-0.3px">材质 &lt;未指定&gt;</div>
<div class="abs trow" style="top:370px;letter-spacing:-0.1px">Ebene vorne</div>
<div class="abs trow" style="top:392px;letter-spacing:-0.1px">Ebene oben</div>
<div class="abs trow" style="top:414px;letter-spacing:-0.1px">Ebene rechts</div>
<div class="abs trow" style="top:436px;letter-spacing:-0.1px">Ursprung</div>
<div class="abs exp" style="top:463.5px"></div>
<div class="abs trow" style="top:458px;letter-spacing:-0.25px">Extrude-Thin1</div>
<div class="abs exp" style="top:485.5px"></div>
<div class="abs trow" style="top:480px;letter-spacing:-0.25px">Extrude-Thin2</div>
<div class="abs trow" style="top:502px;letter-spacing:-0.75px">曲面-中面1</div>
<div class="abs trow" style="top:524px;letter-spacing:-0.75px">边界-曲面1</div>
<div id="btabs" class="abs"></div>
<div id="ftool" class="abs"></div>
<div id="status" class="abs">绘制新草图，或编辑现有草图。</div>
<div class="abs" style="left:2px;top:965px;width:65px;height:16px;background:#c9c9c9;border-top:1px solid #6f6f6f"></div>
<div class="abs" style="left:68px;top:965px;width:46px;height:17px;background:#f7f7f7;font-size:13px;line-height:14px;text-align:center;letter-spacing:-0.3px;color:#111">模型</div>
<div class="abs" style="left:114px;top:966px;width:105px;height:14px;background:#d4d4d4;border:1px solid #9a9a9a;border-top:none;font-size:13px;line-height:12px;text-align:left;padding-left:8px;letter-spacing:-0.5px;color:#111;white-space:nowrap">Motion Study 1</div>
<svg width="984" height="68" viewBox="0 964 984 68" style="left:0;top:964px">
<g fill="#a9a9a9" stroke="#9a9a9a" stroke-width=".5"><path d="M6.5 968.5v9h1.500v-9zM13.500 968.500v9l-5.500-4.500z"/><path d="M28.500 968.500v9l-6-4.500z"/><path d="M38.500 968.500v9l6-4.500z"/><path d="M53 968.500v9l5.500-4.500zM59 968.500v9h1.500v-9z"/></g><path d="M18.500 966v15M34.500 966v15M50.500 966v15" stroke="#b5b5b5" stroke-width="1"/><path d="M4.500 985v26" stroke="#8c8c8c" stroke-width="1.600" stroke-dasharray="1.300 1.700"/><path d="M21.25 990.5h10.5l-3.7800000000000002 5.04v7.14l-2.94 -1.47v-5.670000000000001z" fill="#e2e2e2" stroke="#b9b9b9" stroke-width=".8" stroke-linejoin="round"/><path d="M46.5 989h10l-3.6 4.8v6.8l-2.8 -1.4v-5.4z" fill="#efefef" stroke="#b9b9b9" stroke-width=".8" stroke-linejoin="round"/><path d="M53 993h10l-3.6 4.8v6.8l-2.8 -1.4v-5.4z" fill="#efefef" stroke="#b9b9b9" stroke-width=".8" stroke-linejoin="round"/><path d="M73 987.5h10l-3.6 4.8v6.8l-2.8 -1.4v-5.4z" fill="#c05ad0" stroke="#6a1a7a" stroke-width=".8" stroke-linejoin="round"/><path d="M76.5 991h10l-3.6 4.8v6.8l-2.8 -1.4v-5.4z" fill="#c05ad0" stroke="#6a1a7a" stroke-width=".8" stroke-linejoin="round"/><path d="M80 994.5h10l-3.6 4.8v6.8l-2.8 -1.4v-5.4z" fill="#c05ad0" stroke="#6a1a7a" stroke-width=".8" stroke-linejoin="round"/><rect x="95.500" y="985.500" width="43" height="25" fill="#c2c2c2" stroke="#7f7f7f"/><path d="M102.500 988v15.500l3.700-3.300 2.700 6 2.400-1.100-2.700-5.900 4.900-.4z" fill="#fff" stroke="#222" stroke-width="1.100" stroke-linejoin="round"/><path d="M128 996h6.500l-3.250 3.800z" fill="#444"/><path d="M143.500 988v15.500l3.700-3.300 2.700 6 2.400-1.100-2.700-5.900 4.900-.4z" fill="#fff" stroke="#222" stroke-width="1.100" stroke-linejoin="round"/><path d="M148 992l7.500 7.500 4.500-.5-1 5-3.500-1.500-8-7.500z" fill="#111"/><path d="M168.500 985v26" stroke="#8a8a8a"/><path d="M964.500 985v26" stroke="#8a8a8a"/><g><g transform="translate(0 2.700)"><circle cx="184.0" cy="992.5" r="2.300" fill="#4a9bd0" stroke="#1c5b88" stroke-width=".8"/></g><path d="M190.525 1000h5.95l-2.21 2.72v3.06l-1.53 -0.85v-2.21z" fill="#b03ac0" stroke="#7a1f8a" stroke-width=".6" stroke-linejoin="round"/></g>
<g><g transform="translate(0 2.700)"><path d="M210.5 985.500v20" stroke="#2a7db2" stroke-width="1.800"/></g><path d="M217.525 1000h5.95l-2.21 2.72v3.06l-1.53 -0.85v-2.21z" fill="#b03ac0" stroke="#7a1f8a" stroke-width=".6" stroke-linejoin="round"/></g>
<g><g transform="translate(0 2.700)"><rect x="232.0" y="986.500" width="14.500" height="13.500" fill="url(#gb)" stroke="#1c5b88" stroke-width="1"/></g><path d="M244.525 1000h5.95l-2.21 2.72v3.06l-1.53 -0.85v-2.21z" fill="#b03ac0" stroke="#7a1f8a" stroke-width=".6" stroke-linejoin="round"/></g>
<g><g transform="translate(0 2.700)"><path d="M259.0 996c3-1 4.500-3.500 7-5.500 2.500-2 5-1.500 7-3l4 7c-2 1.500-4 1-6.500 3-2.500 2-4 4.500-7.500 5.500z" fill="url(#gb)" stroke="#1c5b88" stroke-width=".9" stroke-linejoin="round"/></g><path d="M271.525 1000h5.95l-2.21 2.72v3.06l-1.53 -0.85v-2.21z" fill="#b03ac0" stroke="#7a1f8a" stroke-width=".6" stroke-linejoin="round"/></g>
<g><g transform="translate(0 2.700)"><path d="M286.5 990.500l5-3.500h10.500v11l-5 4h-10.500z" fill="url(#gb)" stroke="#1c5b88" stroke-width=".9" stroke-linejoin="round"/><path d="M286.5 990.500h10.500v11.500M297.0 990.500l5-3.500" fill="none" stroke="#1c5b88" stroke-width=".8"/></g><path d="M299.025 1000h5.95l-2.21 2.72v3.06l-1.53 -0.85v-2.21z" fill="#b03ac0" stroke="#7a1f8a" stroke-width=".6" stroke-linejoin="round"/></g>
<g><g transform="translate(0 2.700)"><path d="M314.0 1003l15-16" stroke="#2a7db2" stroke-width="1.700" stroke-dasharray="5 1.500 1.500 1.500"/></g><path d="M326.025 1000h5.95l-2.21 2.72v3.06l-1.53 -0.85v-2.21z" fill="#b03ac0" stroke="#7a1f8a" stroke-width=".6" stroke-linejoin="round"/></g>
<g><g transform="translate(0 2.700)"><path d="M343.5 990l8.500-3v14l-8.500 3.500z" fill="url(#gb)" stroke="#1c5b88" stroke-width=".9" stroke-linejoin="round"/><path d="M347.5 985v22" stroke="#222" stroke-width="1" stroke-dasharray="3 1.300"/></g><path d="M353.025 1000h5.95l-2.21 2.72v3.06l-1.53 -0.85v-2.21z" fill="#b03ac0" stroke="#7a1f8a" stroke-width=".6" stroke-linejoin="round"/></g>
<g><g transform="translate(0 2.700)"><rect x="372.0" y="989.500" width="4.500" height="4.500" fill="#4a9bd0" stroke="#1c5b88" stroke-width=".9"/></g><path d="M380.025 1000h5.95l-2.21 2.72v3.06l-1.53 -0.85v-2.21z" fill="#b03ac0" stroke="#7a1f8a" stroke-width=".6" stroke-linejoin="round"/></g>
<g><g transform="translate(0 2.700)"><path d="M396.0 986.500v11c0 3 2 5 5 5h8" fill="none" stroke="#2a7db2" stroke-width="1.700"/><path d="M400.0 986.500h10M400.0 991h10M400.5 995.500h9.500M404.5 986.500v13M409.0 986.500v13" stroke="#cfd6dc" stroke-width=".8"/></g><path d="M407.025 1000h5.95l-2.21 2.72v3.06l-1.53 -0.85v-2.21z" fill="#b03ac0" stroke="#7a1f8a" stroke-width=".6" stroke-linejoin="round"/></g>
<g><g transform="translate(0 2.700)"><path d="M423.5 1002v-14" stroke="#222" stroke-width="1.500"/><path d="M423.5 988h12" stroke="#2a7db2" stroke-width="1.700"/><g fill="#fff" stroke="#222" stroke-width=".9"><rect x="422.0" y="986.500" width="3" height="3"/><rect x="434.0" y="986.500" width="3" height="3"/><rect x="422.0" y="1000.500" width="3" height="3"/></g></g><path d="M434.025 1000h5.95l-2.21 2.72v3.06l-1.53 -0.85v-2.21z" fill="#b03ac0" stroke="#7a1f8a" stroke-width=".6" stroke-linejoin="round"/></g>
<g><g transform="translate(0 2.700)"><path d="M449.5 1002l14-15" stroke="#2a7db2" stroke-width="1.800"/><rect x="454.5" y="993" width="3.400" height="3.400" fill="#fff" stroke="#222" stroke-width=".9"/></g><path d="M461.025 1000h5.95l-2.21 2.72v3.06l-1.53 -0.85v-2.21z" fill="#b03ac0" stroke="#7a1f8a" stroke-width=".6" stroke-linejoin="round"/></g>
<g><g transform="translate(0 2.700)"><circle cx="483.0" cy="995" r="5.300" fill="none" stroke="#1f6a9c" stroke-width="2"/><circle cx="483.0" cy="995" r="1.800" fill="#222"/><path d="M483.0 986v5M483.0 999v5M474.0 995h5M487.0 995h5" stroke="#222" stroke-width="1.300"/></g><path d="M488.525 1000h5.95l-2.21 2.72v3.06l-1.53 -0.85v-2.21z" fill="#b03ac0" stroke="#7a1f8a" stroke-width=".6" stroke-linejoin="round"/></g>
<g><g transform="translate(0 2.700)"><path d="M503.5 986.500h4.500v18.500h-4.500zM513.5 986.500h4.500v13h-4.500z" fill="#fdfdfd" stroke="#222" stroke-width="1"/><path d="M503.5 995.500h15" stroke="#2a7db2" stroke-width="1" stroke-dasharray="2 1"/></g><path d="M515.525 1000h5.95l-2.21 2.72v3.06l-1.53 -0.85v-2.21z" fill="#b03ac0" stroke="#7a1f8a" stroke-width=".6" stroke-linejoin="round"/></g>
<g><g transform="translate(0 2.700)"><path d="M531.0 993l6-6 8.500 8.500-6 6z" fill="url(#gb)" stroke="#1c3f5c" stroke-width="1.100" stroke-linejoin="round"/><path d="M532.5 991.500l-2.500-2.500" stroke="#222" stroke-width="1.200"/></g><path d="M542.525 1000h5.95l-2.21 2.72v3.06l-1.53 -0.85v-2.21z" fill="#b03ac0" stroke="#7a1f8a" stroke-width=".6" stroke-linejoin="round"/></g>
<g><g transform="translate(0 2.700)"><path d="M556.0 996l3.500 8.500 6.500-17h7.500" fill="none" stroke="#222" stroke-width="1.600" stroke-linejoin="miter"/></g><path d="M569.525 1000h5.95l-2.21 2.72v3.06l-1.53 -0.85v-2.21z" fill="#b03ac0" stroke="#7a1f8a" stroke-width=".6" stroke-linejoin="round"/></g>
<g><g transform="translate(0 2.700)"><rect x="582.5" y="986.500" width="18.500" height="8" fill="#fdfdfd" stroke="#222" stroke-width="1"/><path d="M590.5 986.500v8" stroke="#222"/><rect x="584.5" y="989" width="4" height="3" fill="none" stroke="#222" stroke-width=".8"/><text x="591.5" y="993.500" font-size="6.500" font-family="Liberation Sans,sans-serif" font-weight="bold" fill="#222">03</text></g><path d="M596.525 1000h5.95l-2.21 2.72v3.06l-1.53 -0.85v-2.21z" fill="#b03ac0" stroke="#7a1f8a" stroke-width=".6" stroke-linejoin="round"/></g>
<g><g transform="translate(0 2.700)"><circle cx="619.0" cy="993.500" r="6" fill="#fdfdfd" stroke="#222" stroke-width="1.200"/><path d="M614.5 998.500l-5.500 6" stroke="#222" stroke-width="2"/><text x="616.3" y="996.500" font-size="8" font-family="Liberation Sans,sans-serif" fill="#222">N</text></g><path d="M623.525 1000h5.95l-2.21 2.72v3.06l-1.53 -0.85v-2.21z" fill="#b03ac0" stroke="#7a1f8a" stroke-width=".6" stroke-linejoin="round"/></g>
<g><g transform="translate(0 2.700)"><rect x="637.5" y="986.500" width="14" height="13.500" fill="#fdfdfd" stroke="#222" stroke-width="1"/><text x="639.7" y="998.500" font-size="12.500" font-weight="bold" font-family="Liberation Sans,sans-serif" fill="#222">A</text><path d="M644.5 1001v3M642.0 1007l2.500-3.500 2.500 3.500z" fill="#222" stroke="#222" stroke-width=".8"/></g><path d="M650.525 1000h5.95l-2.21 2.72v3.06l-1.53 -0.85v-2.21z" fill="#b03ac0" stroke="#7a1f8a" stroke-width=".6" stroke-linejoin="round"/></g>
<g><g transform="translate(0 2.700)"><path d="M662.5 1002l6-7.500h13M672.5 994.500l4-5.500 3.500 5.500" fill="none" stroke="#222" stroke-width="1.400"/><path d="M678.5 987l5 2.500-5 2.500" fill="none" stroke="#222" stroke-width="1.100"/></g><path d="M678.025 1000h5.95l-2.21 2.72v3.06l-1.53 -0.85v-2.21z" fill="#b03ac0" stroke="#7a1f8a" stroke-width=".6" stroke-linejoin="round"/></g>
<g><g transform="translate(0 2.700)"><path d="M690.5 986.500v9h8M690.5 992l4.500 3.500" fill="none" stroke="#2a7db2" stroke-width="1.400"/><path d="M690.5 999c1 1.200 1 4.800 0 6M694.0 999c1 1.200 1 4.800 0 6M697.5 999c1 1.200 1 4.800 0 6M701.0 999c1 1.200 1 4.800 0 6" fill="none" stroke="#222" stroke-width="1.200"/></g><path d="M705.025 1000h5.95l-2.21 2.72v3.06l-1.53 -0.85v-2.21z" fill="#b03ac0" stroke="#7a1f8a" stroke-width=".6" stroke-linejoin="round"/></g>
<g><g transform="translate(0 2.700)"><circle cx="727.5" cy="993.500" r="6" fill="#fdfdfd" stroke="#222" stroke-width="1.200"/><path d="M723.0 998.500l-5.500 6" stroke="#222" stroke-width="2"/><text x="724.5" y="997" font-size="8.500" font-weight="bold" font-family="Liberation Sans,sans-serif" fill="#222">A</text><path d="M720.5 995h14" stroke="#222" stroke-width=".9"/></g><path d="M732.025 1000h5.95l-2.21 2.72v3.06l-1.53 -0.85v-2.21z" fill="#b03ac0" stroke="#7a1f8a" stroke-width=".6" stroke-linejoin="round"/></g>
<g><g transform="translate(0 2.700)"><path d="M747.5 986.500h12v11l-6 8-6-8z" fill="#fdfdfd" stroke="#222" stroke-width="1.200" stroke-dasharray="1.500 1.200"/></g><path d="M759.025 1000h5.95l-2.21 2.72v3.06l-1.53 -0.85v-2.21z" fill="#b03ac0" stroke="#7a1f8a" stroke-width=".6" stroke-linejoin="round"/></g>
<g><g transform="translate(0 2.700)"><rect x="773.0" y="986.500" width="14.500" height="14.500" fill="#fdfdfd" stroke="#222" stroke-width="1"/><text x="774.5" y="999" font-size="11.500" font-weight="bold" font-family="Liberation Sans,sans-serif" fill="#222">A</text><circle cx="785.0" cy="989.500" r="1.300" fill="none" stroke="#222" stroke-width=".8"/></g><path d="M786.025 1000h5.95l-2.21 2.72v3.06l-1.53 -0.85v-2.21z" fill="#b03ac0" stroke="#7a1f8a" stroke-width=".6" stroke-linejoin="round"/></g>
<g><g transform="translate(0 2.700)"><circle cx="807.5" cy="995" r="7" fill="#fff" stroke="#222" stroke-width="1.200"/><path d="M807.5 995v-7a7 7 0 0 1 7 7zM807.5 995v7a7 7 0 0 1 -7 -7z" fill="#222"/></g><path d="M813.025 1000h5.95l-2.21 2.72v3.06l-1.53 -0.85v-2.21z" fill="#b03ac0" stroke="#7a1f8a" stroke-width=".6" stroke-linejoin="round"/></g>
<g><g transform="translate(0 2.700)"><path d="M825.5 993.500h9" stroke="#222" stroke-width="1.700"/><rect x="834.5" y="989.500" width="8" height="8" fill="url(#gb)" stroke="#1c5b88" stroke-width="1"/></g><path d="M840.025 1000h5.95l-2.21 2.72v3.06l-1.53 -0.85v-2.21z" fill="#b03ac0" stroke="#7a1f8a" stroke-width=".6" stroke-linejoin="round"/></g>
<g><g transform="translate(0 2.700)"><path d="M853.0 993.500h17" stroke="#222" stroke-width="1.700"/><rect x="857.0" y="989.500" width="8" height="8" fill="url(#gb)" stroke="#1c5b88" stroke-width="1"/></g><path d="M867.525 1000h5.95l-2.21 2.72v3.06l-1.53 -0.85v-2.21z" fill="#b03ac0" stroke="#7a1f8a" stroke-width=".6" stroke-linejoin="round"/></g>
<g><g transform="translate(0 2.700)"><rect x="881.5" y="986.500" width="16" height="14" fill="url(#gb)" stroke="#1c5b88" stroke-width="1"/><path d="M887.5 999.500l5-10.500 5 4.500v6.500z" fill="#f4f4f4" stroke="#333" stroke-width=".9" stroke-linejoin="round"/><path d="M892.5 989l-1 10.500M889.5 995l8 0M892.5 989l5 10.500M887.5 999.500l10-6" fill="none" stroke="#333" stroke-width=".7"/></g><path d="M894.525 1000h5.95l-2.21 2.72v3.06l-1.53 -0.85v-2.21z" fill="#b03ac0" stroke="#7a1f8a" stroke-width=".6" stroke-linejoin="round"/></g>
<g><g transform="translate(0 2.700)"><path d="M909.5 985.500v20" stroke="#2a7db2" stroke-width="1.800"/><path d="M914.5 999.500l5-10.500 5 4.500v6.500z" fill="#f4f4f4" stroke="#333" stroke-width=".9" stroke-linejoin="round"/><path d="M919.5 989l-1 10.500M916.5 995l8 0M919.5 989l5 10.500M914.5 999.500l10-6" fill="none" stroke="#333" stroke-width=".7"/></g><path d="M921.525 1000h5.95l-2.21 2.72v3.06l-1.53 -0.85v-2.21z" fill="#b03ac0" stroke="#7a1f8a" stroke-width=".6" stroke-linejoin="round"/></g>
<g><g transform="translate(0 2.700)"><circle cx="936.5" cy="993" r="2.300" fill="#4a9bd0" stroke="#1c5b88" stroke-width=".8"/><path d="M941.5 999.500l5-10.500 5 4.500v6.500z" fill="#f4f4f4" stroke="#333" stroke-width=".9" stroke-linejoin="round"/><path d="M946.5 989l-1 10.500M943.5 995l8 0M946.5 989l5 10.500M941.5 999.500l10-6" fill="none" stroke="#333" stroke-width=".7"/></g><path d="M948.525 1000h5.95l-2.21 2.72v3.06l-1.53 -0.85v-2.21z" fill="#b03ac0" stroke="#7a1f8a" stroke-width=".6" stroke-linejoin="round"/></g>
</svg>
<svg width="741" height="849" viewBox="243 116 741 849" style="left:243px;top:116px">
<defs>
<radialGradient id="lens" cx=".4" cy=".35" r=".7"><stop offset="0" stop-color="#d9e8f0" stop-opacity=".95"/><stop offset="1" stop-color="#9cc4d9" stop-opacity=".8"/></radialGradient>
<filter id="sh" x="-20%" y="-20%" width="150%" height="150%"><feGaussianBlur in="SourceAlpha" stdDeviation="1.600"/><feOffset dx="1.500" dy="2"/><feComponentTransfer><feFuncA type="linear" slope=".38"/></feComponentTransfer><feMerge><feMergeNode/><feMergeNode in="SourceGraphic"/></feMerge></filter>
</defs>
<!-- heads-up toolbar -->
<g stroke-linejoin="round" stroke-linecap="round">
<g><path d="M756.500 133l-6.500 6.500" stroke="#2a6a94" stroke-width="3.200"/><path d="M756.500 133l-6.500 6.500" stroke="#9fcbe2" stroke-width="1.400"/><circle cx="760.500" cy="128.800" r="5.800" fill="url(#lens)" stroke="#3f5d70" stroke-width="1.100"/><path d="M760.500 124.600l1.500 1.800h-3zM760.500 133l1.500-1.800h-3zM756.300 128.800l1.800 1.500v-3zM764.700 128.800l-1.800 1.500v-3z" fill="#222"/></g>
<g><path d="M784.500 122l3.500 4h-2.200v3.800h3.700v-2.200l4 3.600-4 3.600v-2.200h-3.700v3.800h2.200l-3.500 4-3.500-4h2.200v-3.800h-3.700v2.200l-4-3.600 4-3.600v2.200h3.700v-3.800h-2.200z" fill="#7db6d4" stroke="#1f5c85" stroke-width="1.100"/></g>
<g><path d="M808 135l-5.500 5" stroke="#2a6a94" stroke-width="3.200"/><path d="M808 135l-5.500 5" stroke="#9fcbe2" stroke-width="1.400"/><circle cx="812.300" cy="130.300" r="6" fill="url(#lens)" stroke="#3f5d70" stroke-width="1.100"/><path d="M802.800 125.500v7" stroke="#222" stroke-width="1.600"/><path d="M800.800 126l2-3 2 3zM800.800 132l2 3 2-3z" fill="#222" stroke="#222" stroke-width=".5"/></g>
<g><rect x="832" y="123.500" width="13" height="12" fill="none" stroke="#222" stroke-width="1.300" stroke-dasharray="3 1.600"/><path d="M832.500 135.500l-5.500 5" stroke="#2a6a94" stroke-width="3.200"/><path d="M832.500 135.500l-5.500 5" stroke="#9fcbe2" stroke-width="1.400"/><circle cx="836.500" cy="131" r="6" fill="url(#lens)" stroke="#3f5d70" stroke-width="1.100"/></g>
<g><path d="M859 132.500l-6 6.500" stroke="#2a6a94" stroke-width="3.200"/><path d="M859 132.500l-6 6.500" stroke="#9fcbe2" stroke-width="1.400"/><circle cx="863" cy="128.300" r="5.800" fill="url(#lens)" stroke="#3f5d70" stroke-width="1.100"/><path d="M860.500 127h5M860.500 129.800h5" stroke="#222" stroke-width="1.500"/></g>
<g><path d="M880.500 133.500l10-8 1.500-.5 2.500-1.500 1.500 2-2 2-.5 1.500-9 9c-2 1-5-2.500-4-4.500z" fill="#d9dde0" stroke="#555" stroke-width="1"/><path d="M881 134c1.500 0 3.500 2 3.500 4" fill="none" stroke="#555" stroke-width=".9"/><path d="M897.500 134.800h-5v-2.300l-4.500 3.600 4.500 3.600v-2.300h5z" fill="#2a7db2" stroke="#1c5b88" stroke-width=".6"/></g>
<g><path d="M920 124.500a8.300 8.300 0 1 0 1.500 11.500" fill="none" stroke="#2f6f98" stroke-width="3.400"/><path d="M920 124.500a8.300 8.300 0 1 0 1.500 11.500" fill="none" stroke="#8fc4e0" stroke-width="1.800"/><path d="M916.500 128.500h6.500v-6.500" fill="none" stroke="#2f6f98" stroke-width="1.500"/></g>
<g><path d="M931 136.500l9-2.500 8.500 2.500-9 3.500z" fill="#7fb9d9" fill-opacity=".7" stroke="#1f5c85" stroke-width="1"/><path d="M940 136v-10" stroke="#222" stroke-width="1.700"/><path d="M937.300 127.200l2.700-4 2.700 4z" fill="#222" stroke="#222" stroke-width=".5"/></g>
<g><path d="M957.500 128c0-2.200 4-4 9-4s9 1.800 9 4v7.500c0 1-1.500 2-4.300 2.600v-8.600h-9.400v10c-2.800-.6-4.300-1.600-4.300-3z" fill="#e4ebef" stroke="#1f4f72" stroke-width="1"/><path d="M957.500 129.500c1 .9 2.500 1.400 4.300 1.700v8.300c-2.800-.6-4.300-1.600-4.300-3zM975.500 129.500c-1 .9-2.500 1.400-4.300 1.700v6.900c2.800-.6 4.300-1.600 4.300-2.600z" fill="#3f88b8" stroke="#1f4f72" stroke-width=".8"/><path d="M958.300 134l3-3M958.300 137.500l3-3M972 134l3-3M972 137l3-3" stroke="#d4e8f3" stroke-width=".9"/><path d="M961.800 129.500c1.500-1 7.900-1 9.400 0v7c-1.500.8-7.900.8-9.400 0z" fill="#c9d3da" stroke="#1f4f72" stroke-width=".7"/></g>
<rect x="982" y="124" width="3" height="15" fill="#1f4f72"/>
</g>
<!-- triad -->
<g>
<path d="M283.200 906.200l-10 9.500" stroke="#0a0ad8" stroke-width="3"/><path d="M275.500 910.500l2.500 6.500-8.500 2.500 1.500-7z" fill="#0a0ad8"/>
<path d="M283.200 906.200l18 5.200" stroke="#c40a0a" stroke-width="3"/><path d="M300.500 908l8.500 5.800-9.500 1.500z" fill="#c40a0a"/>
<path d="M283.200 906.500v-17" stroke="#0c7a1c" stroke-width="3.200"/><path d="M279.200 891l4-9.500 4 9.500z" fill="#0c7a1c"/>
<text x="280.200" y="875.500" font-family="Liberation Sans,sans-serif" font-size="8" fill="#0c8a1c">Y</text>
<text x="312.500" y="916" font-family="Liberation Sans,sans-serif" font-size="8" fill="#e84a4a">X</text>
<text x="264" y="923" font-family="Liberation Sans,sans-serif" font-size="8" fill="#2a2af0">Z</text>
</g>
<text x="255" y="960" font-family="Liberation Sans,Noto Sans CJK SC,sans-serif" font-size="12.500" font-weight="bold" fill="#111" letter-spacing="1.500">*上下二等角轴测</text>
</svg>
<div class="abs" style="left:586px;top:603px;width:206px;height:128px;background:#f7f7f7;border:1px solid #8d8d8d"></div>
<div class="abs" style="left:620px;top:666px;width:30px;height:31px;background:#bcbcbc;border:1px solid #878787"></div>
<div class="abs" style="left:620px;top:636px;width:30px;height:32px;background:#fdfdfd;border:1px solid #8f8f8f"></div>
<svg width="984" height="240" viewBox="0 590 984 240" style="left:0;top:590px">
<defs>
<radialGradient id="bb" cx=".35" cy=".3" r=".8"><stop offset="0" stop-color="#9ec4ff"/><stop offset=".5" stop-color="#2f6fe0"/><stop offset="1" stop-color="#1c49a8"/></radialGradient>
<linearGradient id="pn" x1="0" y1="0" x2="1" y2="1"><stop offset="0" stop-color="#ffe97a"/><stop offset="1" stop-color="#e2b400"/></linearGradient>
<clipPath id="c1"><circle cx="723.600" cy="619.800" r="7.600"/></clipPath>
<clipPath id="c2"><circle cx="766.600" cy="617.700" r="6"/></clipPath>
<clipPath id="c3"><circle cx="772.700" cy="622.300" r="6"/></clipPath>
</defs>
<g stroke-linejoin="round">
<!-- r1c1 edit feature -->
<g><path d="M599 613.500l5-1.500 9 2v13l-5 3.500-9-2.500z" fill="#f1f1f1" stroke="#444" stroke-width=".9"/><path d="M596 618.500l6-3 8 2v8.500l-5.500 4-8.500-3z" fill="url(#gb)" stroke="#1c4f78" stroke-width="1"/><path d="M596 618.500l8.500 2.500 5.500-3.500M604.500 621v9" fill="none" stroke="#1c4f78" stroke-width=".8"/><path d="M600.500 629.500l1.200-4.200 8.800-8.300 3 3-8.800 8.300z" fill="url(#pn)" stroke="#333" stroke-width=".9"/><path d="M610.500 617l1.500-1.400 3 3-1.500 1.400z" fill="#e0342b" stroke="#333" stroke-width=".7"/><path d="M600.500 629.500l1.200-4.200 3 3z" fill="#eee" stroke="#333" stroke-width=".7"/></g>
<!-- r1c2 -->
<g><path d="M626.500 630V614l1.500-2h5l1.500 2h9.500v16" fill="#ededed" stroke="#444" stroke-width="1.100"/><path d="M630 630v-15h13v15" fill="#fafafa" stroke="#444" stroke-width=".9"/><path d="M634.500 617.500h5v3.500h-5zM631.500 624.500h4v3.500h-4zM638.500 624.500h4v3.500h-4z" fill="#f1c21c" stroke="#7a5c00" stroke-width=".8"/><path d="M637 621v2M633.500 624.500v-1.500h7v1.500" fill="none" stroke="#7a5c00" stroke-width=".8"/><path d="M636.500 612c3.500-.5 6 1.200 6.500 4h2l-3.200 3.800-3.300-3.800h2c-.5-1.600-2-2.400-4-2z" fill="#1f6a9c" stroke="#15507a" stroke-width=".5"/></g>
<!-- r1c3 -->
<g><path d="M659.800 615.500v11" stroke="#111" stroke-width="1.800"/><path d="M656.800 625l3 5 3-5z" fill="#111" stroke="#111" stroke-width=".5"/><path d="M665.500 615l3.500-2 5 1v6l-3.500 2-5-1z" fill="url(#gb)" stroke="#1c4f78" stroke-width=".9"/><path d="M665.500 615l5 1 3.500-2M670.500 616v6" fill="none" stroke="#1c4f78" stroke-width=".7"/><path d="M665.500 624l3.500-2 5 1v6l-3.500 2-5-1z" fill="#fafafa" stroke="#c6c6c6" stroke-width=".9"/><path d="M665.500 624l5 1 3.500-2M670.500 625v6" fill="none" stroke="#c6c6c6" stroke-width=".7"/></g>
<!-- r1c4 back -->
<g><path d="M699.500 628v-8h-7" fill="none" stroke="#111" stroke-width="2.200" stroke-linejoin="miter"/><path d="M693.500 615.500v9l-6-4.500z" fill="#111"/></g>
<!-- r1c5 ball+pencil -->
<g><g clip-path="url(#c1)"><rect x="715" y="611" width="9" height="9.500" fill="#2f6fe0"/><rect x="724" y="611" width="9" height="9.500" fill="#d9261c"/><rect x="715" y="620.500" width="9" height="9" fill="#2fa52f"/><rect x="724" y="620.500" width="9" height="9" fill="#f1c21c"/><path d="M723.600 619.800L729 611h5v9z" fill="#d9261c"/><ellipse cx="720.500" cy="616" rx="4.500" ry="3" fill="#fff" opacity=".5"/></g><circle cx="723.600" cy="619.800" r="7.600" fill="none" stroke="#555" stroke-width=".5" opacity=".6"/>
<path d="M722.500 631.500l1.500-4.500 8-8 3 3-8 8z" fill="url(#pn)" stroke="#222" stroke-width=".9"/><path d="M732 619l1.500-1.400 3 3-1.500 1.400z" fill="#e0342b" stroke="#222" stroke-width=".7"/><path d="M722.500 631.500l1.500-4.500 3 3z" fill="#eee" stroke="#222" stroke-width=".7"/></g>
<path d="M743.800 620h5.400l-2.700 3z" fill="#333"/>
<!-- r1c6 two balls -->
<g><g clip-path="url(#c2)"><rect x="760" y="611" width="7" height="7" fill="#2f6fe0"/><rect x="767" y="611" width="7" height="7" fill="#d9261c"/><rect x="760" y="618" width="7" height="7" fill="#2fa52f"/><rect x="767" y="618" width="7" height="7" fill="#f1c21c"/><ellipse cx="764.500" cy="614.500" rx="3.500" ry="2.300" fill="#fff" opacity=".5"/></g>
<g clip-path="url(#c3)"><rect x="766" y="616" width="7" height="7" fill="#2f6fe0"/><rect x="773" y="616" width="7" height="7" fill="#d9261c"/><rect x="766" y="623" width="7" height="7" fill="#2fa52f"/><rect x="773" y="623" width="7" height="7" fill="#f1c21c"/><ellipse cx="770.500" cy="619.500" rx="3.500" ry="2.300" fill="#fff" opacity=".5"/></g>
<path d="M760.500 623.500l4 4" stroke="#111" stroke-width="2"/><path d="M762 630.500h5.500v-5.500z" fill="#111"/></g>
<!-- r2c1 select other -->
<g><rect x="603.500" y="643.500" width="9.500" height="9.500" fill="#fafafa" stroke="#222" stroke-width="1"/><rect x="600" y="645.500" width="9.500" height="9.500" fill="url(#gb)" stroke="#1c4f78" stroke-width="1"/><rect x="596.500" y="648" width="9.500" height="9.500" fill="#fdfdfd" stroke="#222" stroke-width="1.200"/><path d="M603 649.500v10l2.400-2.100 1.800 3.900 1.600-.7-1.800-3.900 3.200-.3z" fill="#fff" stroke="#222" stroke-width=".9"/></g>
<!-- r2c2 sketch -->
<g><path d="M637.500 641.500v21M642.500 641.500v21M631 649.500h17M631 654.500h17" stroke="#e6e9eb" stroke-width=".9"/><path d="M640 643.600h-8.500q-4.500 0-4.500 4.500v7.400q0 4.500 4.500 4.500h12.500" fill="none" stroke="#1f6a9c" stroke-width="1.700"/><g stroke="#f08a1c" stroke-width="1.100"><path d="M628.700 643v7.400M625 646.700h7.400M626.100 644.100l5.200 5.200M631.300 644.100l-5.200 5.200"/></g><circle cx="628.700" cy="646.700" r="1.200" fill="#ffe27a"/></g>
<!-- r2c3 hide -->
<g opacity=".85"><path d="M657.500 652c3-5 6-6.500 8-6.500s5 1.500 8 6.500c-3 4-6 5.500-8 5.500s-5-1.500-8-5.500z" fill="#e4e4e4" stroke="#a8a8a8" stroke-width="1"/><circle cx="665.500" cy="651.500" r="3" fill="#c4c4c4"/><path d="M659.500 645.500l12.500 12" stroke="#333" stroke-width="1.500"/></g>
<!-- r2c4 zoom sel -->
<g><path d="M693.500 654l-6 6" stroke="#1c5b88" stroke-width="3.200" stroke-linecap="round"/><path d="M693.500 654l-6 6" stroke="#5aa6d4" stroke-width="1.500" stroke-linecap="round"/><circle cx="697.600" cy="649.700" r="5.600" fill="#eef3f6" stroke="#444" stroke-width="1.100"/><path d="M695 648.300h5.200M695 651.200h5.200" stroke="#111" stroke-width="1.500"/></g>
<!-- r2c5 normal to -->
<g><path d="M716 656.500l9-2.500 9 2.500-9.500 4z" fill="#7fc0e2" stroke="#1c5b88" stroke-width="1"/><path d="M725 656v-10.500" stroke="#111" stroke-width="1.800"/><path d="M722 647l3-4.500 3 4.500z" fill="#111" stroke="#111" stroke-width=".5"/></g>
<!-- r2c6 fillet cube -->
<g><path d="M746.500 649l8 3v8.500l-8-3.500z" fill="#e3e3e3" stroke="#333" stroke-width="1"/><path d="M754.500 652c0-4 3-6.500 9.500-6.500v9l-9.500 6z" fill="#fbfbfb" stroke="#333" stroke-width="1"/><path d="M746.500 649c0-3.500 3.500-6 10.500-6l7 2.500c-6.500 0-9.500 2.500-9.500 6.500z" fill="#f4f4f4" stroke="#333" stroke-width="1"/><path d="M754.500 652c0-4 3-6.500 9.500-6.500v3.500c-4.500.2-7.500 1.500-9.500 5z" fill="url(#bl2)" stroke="#1c5b88" stroke-width=".8"/></g>
<!-- r3c1 section -->
<g><path d="M600.500 677c0-1.500 3-2.800 6.500-2.800s6.500 1.300 6.500 2.800v9c0 1.500-3 2.800-6.500 2.800s-6.500-1.300-6.500-2.800z" fill="#dfe7ec" stroke="#1f4f72" stroke-width="1"/><path d="M609 679.500h4.500v8.500l-4.500 1.500zM600.500 679.500h4v10l-4-1.500z" fill="#3f88b8" stroke="#1f4f72" stroke-width=".8"/><path d="M609.500 683l3.500-2.500M609.500 686l3.500-2.500M609.500 689l3.500-2.500" stroke="#cfe4f0" stroke-width=".9"/></g>
<!-- r3c2 blue cube -->
<g><path d="M627 678l6-3.500 11 2.500v10l-6 4.500-11-3.500z" fill="url(#gb)" stroke="#143d5c" stroke-width="1.100"/><path d="M627 678l11 3 6-4M638 681v10.500" fill="none" stroke="#143d5c" stroke-width=".9"/></g>
<!-- r4c1 cube outline -->
<g><path d="M597 707.500l6.500-4 11 2.500v10.500l-6.500 4.500-11-3.500z" fill="#fdfdfd" stroke="#222" stroke-width="1"/><path d="M597 707.500l11 3 6.500-4.500M608 710.500v10.500" fill="none" stroke="#222" stroke-width=".9"/></g>
</g>
<!-- red highlight -->
<rect x="616.800" y="632.600" width="36.600" height="38" rx="5.500" fill="none" stroke="#f5474d" stroke-width="5.200"/>
<!-- tooltip -->
<g filter="url(#sh)"><rect x="650" y="670" width="60" height="20.500" rx="3" fill="#fbfbfb"/></g>
<text x="655.300" y="684.300" font-family="Liberation Sans,Noto Sans CJK SC,sans-serif" font-size="12" fill="#575757">草图绘制</text>
<!-- breadcrumb -->
<g><rect x="542.500" y="736.500" width="206" height="23" rx="2" fill="#f4f4f4" fill-opacity=".93" stroke="#c3c3c3"/><path d="M705.500 737h41a2 2 0 0 1 2 2v18a2 2 0 0 1 -2 2h-41l9.500-11z" fill="#abc9ea" stroke="#8fb3dc" stroke-width=".8"/>
<path d="M574 737l9 11-9 11M607.500 737l9 11-9 11" fill="none" stroke="#c6c6c6" stroke-width="1"/>
<rect x="720.500" y="741.500" width="13" height="13" fill="url(#gb)" stroke="#1c4f78" stroke-width="1"/>
<g><path d="M556.0 746.1L559.9 743.9L559.9 742.0L564.2 739.5L567.5 741.2L567.5 745.2L571.8 747.5L571.8 752.2L565.7 756.4L556.0 750.9Z" fill="url(#gyl)" stroke="#7a5c00" stroke-width="1" stroke-linejoin="round"/><path d="M559.9 742.0L563.4 743.7L567.5 741.2M563.4 743.7L563.4 747.9L567.5 745.2M563.4 747.9L565.7 749.2M556.0 746.1L565.7 751.5L571.8 747.5M565.7 751.5L565.7 756.4M559.9 743.9L563.4 745.8" fill="none" stroke="#8a6a00" stroke-width=".8" stroke-linejoin="round"/></g>
<path d="M587.500 746c3-4.500 6-3 8.500-3.500s4-2.500 5.500-3.500l3 9.500c-1.500 1-3 3-5.500 3.500s-5.500-1-8.500 3.500z" fill="url(#gb)" stroke="#1c5b88" stroke-width=".9" stroke-linejoin="round"/>
<g><path d="M620 743l5-3 10.500 2v10l-5 4-10.500-3z" fill="#fdfdfd" stroke="#444" stroke-width=".9" stroke-linejoin="round"/><path d="M623.500 743c1 1.500 3 2 5 1.500l3-1.500v7l-4 3c-2 0-3-1-4-2.500z" fill="url(#gb)" stroke="#1c5b88" stroke-width=".8" stroke-linejoin="round"/><path d="M626 746.500l9.500-1.800v9.500l-5 4-4.500-2z" fill="url(#gy)" stroke="#444" stroke-width=".9" stroke-linejoin="round"/><path d="M620 743l6 3.500M625 740v3.500" fill="none" stroke="#444" stroke-width=".8"/></g>
<text x="644.500" y="752.500" font-family="Liberation Sans,Noto Sans CJK SC,sans-serif" font-size="11.300" fill="#000" letter-spacing="-.1">曲面-中面1</text></g>
<!-- arrow -->
<g filter="url(#sh)"><path d="M515.200 736L589 680.500" stroke="#f8444a" stroke-width="10" stroke-linecap="round"/><path d="M612 663.300l-32.600 6.300 17.900 22.400z" fill="#f8444a" stroke="#f8444a" stroke-width="2" stroke-linejoin="round"/></g>
</svg>
<div class="abs" style="left:0;top:0;width:984px;height:1032px;overflow:hidden;pointer-events:none">
<div class="wm" style="left:492px;top:371px;transform:rotate(-33.400deg)"><div style="font-size:41px;letter-spacing:5.400px;position:absolute;left:0;top:-38px">Senshow</div><div style="font-size:31px;letter-spacing:7.500px;position:absolute;left:4px;top:9px">新思诺软件</div></div>
<div class="wm" style="left:468px;top:828px;transform:rotate(-33.400deg)"><div style="font-size:41px;letter-spacing:5.400px;position:absolute;left:0;top:-38px">Senshow</div><div style="font-size:31px;letter-spacing:7.500px;position:absolute;left:4px;top:9px">新思诺软件</div></div>
<div class="wm" style="left:50px;top:640px;transform:rotate(-33.400deg)"><div style="font-size:41px;letter-spacing:5.400px;position:absolute;left:0;top:-38px">Senshow</div><div style="font-size:31px;letter-spacing:7.500px;position:absolute;left:4px;top:9px">新思诺软件</div></div>
<div class="wm" style="left:800px;top:620px;transform:rotate(-33.400deg)"><div style="font-size:41px;letter-spacing:5.400px;position:absolute;left:0;top:-38px">Senshow</div><div style="font-size:31px;letter-spacing:7.500px;position:absolute;left:4px;top:9px">新思诺软件</div></div>
<div class="wm" style="left:165px;top:148px;transform:rotate(-33.400deg)"><div style="font-size:41px;letter-spacing:5.400px;position:absolute;left:0;top:-38px">Senshow</div><div style="font-size:31px;letter-spacing:7.500px;position:absolute;left:4px;top:9px">新思诺软件</div></div>
<div class="wm" style="left:888px;top:146px;transform:rotate(-33.400deg)"><div style="font-size:41px;letter-spacing:5.400px;position:absolute;left:0;top:-38px">Senshow</div><div style="font-size:31px;letter-spacing:7.500px;position:absolute;left:4px;top:9px">新思诺软件</div></div>
<div class="wm" style="left:828px;top:1072px;transform:rotate(-33.400deg)"><div style="font-size:41px;letter-spacing:5.400px;position:absolute;left:0;top:-38px">Senshow</div><div style="font-size:31px;letter-spacing:7.500px;position:absolute;left:4px;top:9px">新思诺软件</div></div>
<div class="wm" style="left:92px;top:1078px;transform:rotate(-33.400deg)"><div style="font-size:41px;letter-spacing:5.400px;position:absolute;left:0;top:-38px">Senshow</div><div style="font-size:31px;letter-spacing:7.500px;position:absolute;left:4px;top:9px">新思诺软件</div></div>
</div>
</body>
</html>
